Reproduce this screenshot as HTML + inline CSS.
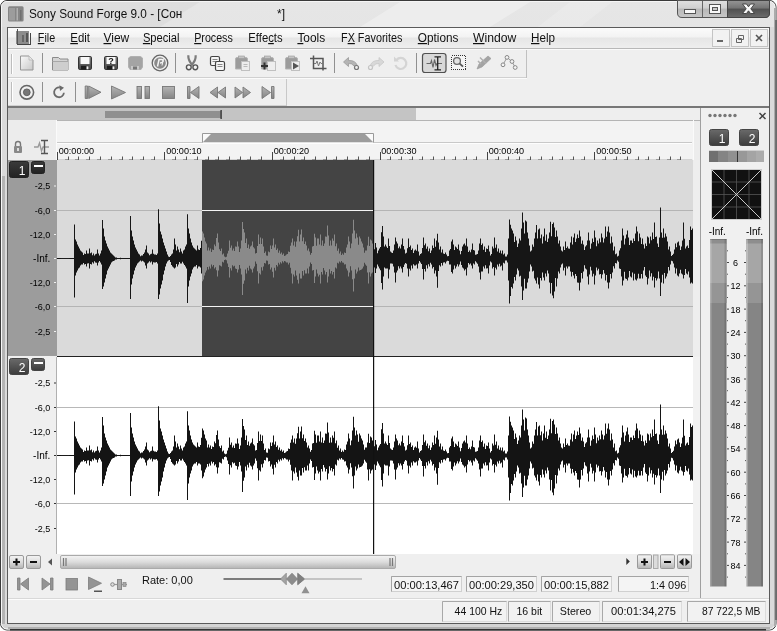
<!DOCTYPE html>
<html><head><meta charset="utf-8"><title>Sony Sound Forge 9.0</title>
<style>
html,body{margin:0;padding:0;}
body{width:777px;height:631px;overflow:hidden;background:#fff;font-family:"Liberation Sans",sans-serif;}
svg{position:absolute;left:0;top:0;filter:grayscale(1);}
text{font-family:"Liberation Sans",sans-serif;}
.rl{font-size:9.5px;fill:#000;}
.db{font-size:9px;fill:#000;}
.db3{font-size:10px;fill:#000;}
.db2{font-size:9.5px;fill:#111;}
.mn{font-size:12px;fill:#111;}
.tt{font-size:12px;fill:#111;}
.st{font-size:11px;fill:#111;}
</style></head><body>
<svg width="777" height="631" viewBox="0 0 777 631">
<defs>

<linearGradient id="gTitle" x1="0" y1="0" x2="0" y2="1"><stop offset="0" stop-color="#e6e6e6"/><stop offset="0.5" stop-color="#dcdcdc"/><stop offset="1" stop-color="#d4d4d4"/></linearGradient>
<linearGradient id="gMenu" x1="0" y1="0" x2="0" y2="1"><stop offset="0" stop-color="#fbfbfb"/><stop offset="0.45" stop-color="#f3f3f3"/><stop offset="0.5" stop-color="#e6e6e6"/><stop offset="1" stop-color="#eeeeee"/></linearGradient>
<linearGradient id="gBtn" x1="0" y1="0" x2="0" y2="1"><stop offset="0" stop-color="#e0e0e0"/><stop offset="0.45" stop-color="#cfcfcf"/><stop offset="0.5" stop-color="#b8b8b8"/><stop offset="1" stop-color="#c8c8c8"/></linearGradient>
<linearGradient id="gClose" x1="0" y1="0" x2="0" y2="1"><stop offset="0" stop-color="#959595"/><stop offset="0.45" stop-color="#747474"/><stop offset="0.5" stop-color="#505050"/><stop offset="1" stop-color="#6c6c6c"/></linearGradient>
<linearGradient id="gScroll" x1="0" y1="0" x2="0" y2="1"><stop offset="0" stop-color="#f4f4f4"/><stop offset="0.5" stop-color="#dcdcdc"/><stop offset="1" stop-color="#b4b4b4"/></linearGradient>
<linearGradient id="gDark" x1="0" y1="0" x2="0" y2="1"><stop offset="0" stop-color="#6a6a6a"/><stop offset="1" stop-color="#3c3c3c"/></linearGradient>
<linearGradient id="gDark1" x1="0" y1="0" x2="0" y2="1"><stop offset="0" stop-color="#3a3a3a"/><stop offset="1" stop-color="#222"/></linearGradient>
<linearGradient id="gMeter" x1="0" y1="0" x2="0" y2="1"><stop offset="0" stop-color="#b0b0b0"/><stop offset="0.2" stop-color="#909090"/><stop offset="1" stop-color="#808080"/></linearGradient>

<linearGradient id="gSave" x1="0" y1="0" x2="0" y2="1"><stop offset="0" stop-color="#7a7a7a"/><stop offset="1" stop-color="#484848"/></linearGradient>
<linearGradient id="gDoc" x1="0" y1="0" x2="1" y2="1"><stop offset="0" stop-color="#fafafa"/><stop offset="1" stop-color="#c8c8c8"/></linearGradient>
<linearGradient id="gIco" x1="0" y1="0" x2="0" y2="1"><stop offset="0" stop-color="#b4b4b4"/><stop offset="1" stop-color="#848484"/></linearGradient>

</defs>

<rect x="0" y="0" width="777" height="631" fill="#fff"/>
<rect x="0.500" y="0.500" width="775.500" height="629.500" rx="6.500" ry="6.500" fill="url(#gTitle)" stroke="#3a3a3a"/>
<rect x="1" y="27" width="775" height="597" fill="#dadada"/>
<rect x="1.500" y="1.500" width="773.500" height="627.500" rx="5.500" ry="5.500" fill="none" stroke="#f6f6f6"/>
<rect x="2" y="176" width="3" height="448" fill="#b4b4b4"/>
<rect x="774" y="8" width="2" height="618" fill="#acacac"/>
<rect x="8" y="627" width="762" height="2" fill="#b0b0b0"/>
<rect x="0" y="20" width="1" height="600" fill="#3a3a3a"/>
<rect x="775.500" y="20" width="1" height="600" fill="#3a3a3a"/>
<rect x="10" y="629" width="756" height="1.500" fill="#333"/>
<!-- client -->
<rect x="7.500" y="27.500" width="762" height="596" fill="#efefef" stroke="#5a5a5a"/>
<!-- title -->
<path d="M400 2 L530 2 L490 27 L360 27 Z" fill="#fff" opacity="0.300"/>
<path d="M570 2 L612 2 L580 27 L538 27 Z" fill="#fff" opacity="0.180"/>
<path d="M2 2 L200 2 L160 27 L2 27 Z" fill="#000" opacity="0.030"/>
<rect x="8" y="6.300" width="15.600" height="15.200" rx="1.500" fill="#858585"/>
<rect x="9" y="8" width="6" height="12.500" fill="#9c9c9c"/>
<rect x="16.500" y="8" width="1.500" height="12.500" fill="#b0b0b0"/>
<rect x="20" y="10" width="1.500" height="10.500" fill="#707070"/>
<text x="29" y="18" class="tt" textLength="153.2" lengthAdjust="spacingAndGlyphs">Sony Sound Forge 9.0 - [Сон</text>
<text x="277" y="18" class="tt">*]</text>
<!-- caption buttons -->
<path d="M677.500 0.500 L677.500 13 Q677.500 17.500 682 17.500 L765 17.500 Q769.500 17.500 769.500 13 L769.500 0.500 Z" fill="url(#gBtn)" stroke="#555"/>
<path d="M727.500 0.500 L727.500 17.500 L765 17.500 Q769.500 17.500 769.500 13 L769.500 0.500 Z" fill="url(#gClose)" stroke="#444"/>
<rect x="702" y="1" width="1" height="16" fill="#666"/>
<rect x="684.500" y="9.500" width="11" height="4" fill="#f8f8f8" stroke="#555"/>
<rect x="709.500" y="4.500" width="11" height="9" fill="#f8f8f8" stroke="#555"/>
<rect x="712.500" y="7.500" width="5" height="3" fill="#c8c8c8" stroke="#555"/>
<path d="M742.500 4 L746.500 4 L748.500 6.800 L750.500 4 L754.500 4 L750.800 8.800 L754.500 13.500 L750.500 13.500 L748.500 10.800 L746.500 13.500 L742.500 13.500 L746.200 8.800 Z" fill="#f8f8f8" stroke="#3c3c3c" stroke-width="0.900"/>


<rect x="8" y="28" width="761" height="20" fill="url(#gMenu)"/>
<rect x="8" y="48" width="761" height="1" fill="#b8b8b8"/>
<rect x="8" y="49" width="761" height="1" fill="#fafafa"/>
<!-- app icon -->
<rect x="16" y="31" width="13" height="13" fill="#8c8c8c"/>
<rect x="17" y="29" width="1" height="16" fill="#555"/>
<rect x="17" y="44" width="14" height="1" fill="#444"/>
<rect x="30" y="33" width="1" height="12" fill="#444"/>
<rect x="26" y="33" width="2" height="9" fill="#555"/>
<rect x="22" y="35" width="2" height="7" fill="#666"/>
<g class="mn">
<text x="37.8" y="42" textLength="17.4" lengthAdjust="spacingAndGlyphs"><tspan text-decoration="underline">F</tspan>ile</text>
<text x="70.3" y="42" textLength="19.7" lengthAdjust="spacingAndGlyphs"><tspan text-decoration="underline">E</tspan>dit</text>
<text x="103.5" y="42" textLength="25.8" lengthAdjust="spacingAndGlyphs"><tspan text-decoration="underline">V</tspan>iew</text>
<text x="142.9" y="42" textLength="36.6" lengthAdjust="spacingAndGlyphs"><tspan text-decoration="underline">S</tspan>pecial</text>
<text x="194.2" y="42" textLength="38.6" lengthAdjust="spacingAndGlyphs"><tspan text-decoration="underline">P</tspan>rocess</text>
<text x="248.3" y="42" textLength="34.3" lengthAdjust="spacingAndGlyphs">Effe<tspan text-decoration="underline">c</tspan>ts</text>
<text x="297.4" y="42" textLength="27.8" lengthAdjust="spacingAndGlyphs"><tspan text-decoration="underline">T</tspan>ools</text>
<text x="341" y="42" textLength="61.4" lengthAdjust="spacingAndGlyphs">F<tspan text-decoration="underline">X</tspan> Favorites</text>
<text x="417.8" y="42" textLength="40.6" lengthAdjust="spacingAndGlyphs"><tspan text-decoration="underline">O</tspan>ptions</text>
<text x="473" y="42" textLength="43.3" lengthAdjust="spacingAndGlyphs"><tspan text-decoration="underline">W</tspan>indow</text>
<text x="531" y="42" textLength="24.0" lengthAdjust="spacingAndGlyphs"><tspan text-decoration="underline">H</tspan>elp</text>
</g>
<!-- mdi buttons -->
<rect x="712.500" y="29.500" width="17" height="17" fill="#f2f2f2" stroke="#c4c4c4"/>
<rect x="731.500" y="29.500" width="17" height="17" fill="#f2f2f2" stroke="#c4c4c4"/>
<rect x="750.500" y="29.500" width="17" height="17" fill="#f2f2f2" stroke="#c4c4c4"/>
<rect x="717" y="40" width="6" height="2" fill="#666"/>
<path d="M738.500 35.500 h5 v4 h-5 z M736.500 38.500 h5 v4 h-5 z" fill="#f2f2f2" stroke="#666"/>
<path d="M756 35 l6 6 M762 35 l-6 6" stroke="#555" stroke-width="1.6" fill="none"/>


<!-- toolbar row separators -->
<rect x="8" y="77" width="519" height="1" fill="#d0d0d0"/>
<rect x="8" y="78" width="519" height="1" fill="#fbfbfb"/>
<rect x="526" y="50" width="1" height="28" fill="#c0c0c0"/>
<rect x="8" y="105" width="278" height="1" fill="#d0d0d0"/>
<rect x="286" y="79" width="1" height="27" fill="#c8c8c8"/>
<rect x="8" y="106" width="761" height="2" fill="#777"/>
<!-- grips -->
<rect x="11" y="54" width="1" height="20" fill="#bdbdbd"/><rect x="12" y="54" width="1" height="20" fill="#fff"/>
<rect x="11" y="82" width="1" height="20" fill="#bdbdbd"/><rect x="12" y="82" width="1" height="20" fill="#fff"/>
<!-- separators row1 -->
<g fill="#909090">
<rect x="42" y="53" width="1" height="20"/><rect x="175" y="53" width="1" height="20"/><rect x="334" y="53" width="1" height="20"/><rect x="416" y="53" width="1" height="20"/>
<rect x="42" y="82" width="1" height="20"/><rect x="75" y="82" width="1" height="20"/>
</g>

<!-- new -->
<path d="M20.500 56 h8.500 l4 4 v10 h-12.500 z" fill="url(#gDoc)" stroke="#959595"/>
<path d="M29 56 v4 h4" fill="#e8e8e8" stroke="#b8b8b8" stroke-width="0.800"/>
<!-- open -->
<path d="M52.500 59 v-1.500 h6 l1.500 1.500 h8 v11 h-15.500 z" fill="#d4d4d4" stroke="#8a8a8a"/>
<path d="M52.500 61.500 h15.500" stroke="#a8a8a8"/>
<rect x="53" y="62" width="15" height="8" fill="#cecece"/>
<!-- save -->
<rect x="78.500" y="56.500" width="13" height="13" rx="1.200" fill="url(#gSave)" stroke="#333"/>
<rect x="80.500" y="57" width="9" height="7" fill="#f8f8f8"/>
<rect x="81" y="65.800" width="8" height="3.700" fill="#1c1c1c"/><rect x="86.500" y="66.300" width="2" height="3" fill="#f0f0f0"/>
<!-- save as -->
<rect x="104.500" y="56.500" width="13" height="13" rx="1.200" fill="url(#gSave)" stroke="#333"/>
<rect x="106.500" y="57" width="9" height="7" fill="#f8f8f8"/>
<text x="111" y="63.800" text-anchor="middle" style="font-size:9px;font-weight:bold;fill:#111">?</text>
<rect x="107" y="65.800" width="8" height="3.700" fill="#1c1c1c"/><rect x="112.500" y="66.300" width="2" height="3" fill="#f0f0f0"/>
<!-- render as (gray) -->
<path d="M128.500 58 l2 -1.500 h10 l2 1.500 v9 l-1.500 2.500 h-11 l-1.500 -2.500 z" fill="#a4a4a4" stroke="#b0b0b0"/>
<rect x="131" y="66" width="8" height="3.500" fill="#c8c8c8"/><rect x="133" y="66.500" width="4" height="3" fill="#777"/>
<!-- P circle -->
<circle cx="160" cy="63" r="7.800" fill="#f0f0f0" stroke="#666" stroke-width="1.300"/>
<circle cx="160" cy="63" r="5.800" fill="#8a8a8a"/>
<path d="M157.500 66.500 l1.500 -7 h3 q1.500 0.500 1 2 q-0.800 1.500 -3 1.500" fill="none" stroke="#f4f4f4" stroke-width="1.500"/>
<path d="M163.500 58.500 l-1.500 7" stroke="#f4f4f4" stroke-width="1"/>
<!-- scissors -->
<path d="M188.300 55.300 q-0.300 5 4.200 10 M195.700 55.300 q0.300 5 -4.200 10" fill="none" stroke="#7c7c7c" stroke-width="2.200"/>
<circle cx="188.800" cy="67.300" r="2.400" fill="#f4f4f4" stroke="#555" stroke-width="1.400"/>
<circle cx="195.300" cy="67.300" r="2.400" fill="#f4f4f4" stroke="#555" stroke-width="1.400"/>
<!-- copy -->
<rect x="210.500" y="56.500" width="9" height="9" rx="1.500" fill="#f6f6f6" stroke="#444" stroke-width="1.200"/>
<path d="M212.500 59.500 h5 M212.500 61.500 h5" stroke="#888"/>
<rect x="215.500" y="61.500" width="9" height="9" rx="1.500" fill="#f6f6f6" stroke="#444" stroke-width="1.200"/>
<path d="M217.500 64.500 h5 M217.500 66.500 h5" stroke="#888"/>
<!-- paste -->
<g id="clip1">
<path d="M235.500 59 q0 -1.500 1.500 -1.500 h9 q1.500 0 1.500 1.500 v10 h-12 z" fill="#9c9c9c" stroke="#b4b4b4"/>
<rect x="238.500" y="56" width="6" height="2.500" fill="#c4c4c4" stroke="#999" stroke-width="0.600"/>
<rect x="241.500" y="61.500" width="8" height="9" fill="#eee" stroke="#c0c0c0"/>
</g>
<path d="M243.500 64.500 h4 M243.500 66.500 h4" stroke="#bbb"/>
<!-- paste special -->
<path d="M261.500 59 q0 -1.500 1.500 -1.500 h9 q1.500 0 1.500 1.500 v10 h-12 z" fill="#9c9c9c" stroke="#b4b4b4"/>
<rect x="264.500" y="56" width="6" height="2.500" fill="#c4c4c4" stroke="#999" stroke-width="0.600"/>
<rect x="267.500" y="61.500" width="8" height="9" fill="#eee" stroke="#c0c0c0"/>
<path d="M261 66 h7 M264.500 62.500 v7" stroke="#333" stroke-width="2"/>
<!-- paste play -->
<path d="M285.500 59 q0 -1.500 1.500 -1.500 h9 q1.500 0 1.500 1.500 v10 h-12 z" fill="#9c9c9c" stroke="#b4b4b4"/>
<rect x="288.500" y="56" width="6" height="2.500" fill="#c4c4c4" stroke="#999" stroke-width="0.600"/>
<rect x="291.500" y="61.500" width="8" height="9" fill="#eee" stroke="#c0c0c0"/>
<path d="M293 62.500 v7 l6 -3.500 z" fill="#555"/>
<!-- trim/crop -->
<path d="M313.500 55.500 v13 h13 M310 58.500 h13 v12" fill="none" stroke="#555" stroke-width="1.500"/>
<path d="M314 63.500 h2 l1 -2.500 l1.500 5 l1.500 -4 l1 1.500 h1.500" fill="none" stroke="#777" stroke-width="1"/>
<!-- undo -->
<path d="M343.500 62 l5 -4.500 v3 q7 -0.500 9 5.500 h-3.500 q-2 -3 -5.500 -2.500 v3 z" fill="#b4b4b4" stroke="#9a9a9a" stroke-width="0.800"/>
<circle cx="356.500" cy="67.500" r="2" fill="#f0f0f0" stroke="#777" stroke-width="1.200"/>
<!-- redo faded -->
<path d="M384 62 l-5 -4.500 v3 q-7 -0.500 -9 5.500 h3.500 q2 -3 5.500 -2.500 v3 z" fill="#d8d8d8" stroke="#c8c8c8" stroke-width="0.800"/>
<circle cx="370.500" cy="67.500" r="2" fill="#f0f0f0" stroke="#c4c4c4" stroke-width="1.200"/>
<!-- refresh faded -->
<path d="M396.500 60 a5.500 5.500 0 1 1 -1 5" fill="none" stroke="#d4d4d4" stroke-width="2.200"/>
<path d="M394 56.500 v5 h5 z" fill="#d4d4d4"/>
<!-- edit tool pressed -->
<rect x="422.500" y="53.500" width="23.500" height="19" rx="2.500" fill="#d8d8d8" stroke="#505050" stroke-width="1.200"/>
<path d="M426.500 63.500 h4 l1 -3 l1.500 7 l1.500 -8 l1.500 6 l1 -2 h5" fill="none" stroke="#666" stroke-width="1.100"/>
<path d="M434.500 56.800 h6.500 M434.500 69.800 h6.500 M437.700 56.800 v13" fill="none" stroke="#222" stroke-width="1.300"/>
<!-- magnify -->
<rect x="451.500" y="55.500" width="14" height="14" fill="#f4f4f4" stroke="#333" stroke-dasharray="1 1" shape-rendering="crispEdges"/>
<circle cx="457" cy="61" r="3.400" fill="#e4e4e4" stroke="#666" stroke-width="1.300"/>
<path d="M459.700 63.700 l3.300 3" stroke="#555" stroke-width="1.800"/>
<!-- pencil -->
<path d="M477 69 l2 -5 l9 -8 l3 2.500 l-9 8.500 z" fill="#a4a4a4" stroke="#999" stroke-width="0.600"/>
<path d="M480 57.500 l6 6 M478 61 l3 3" stroke="#b0b0b0" stroke-width="1.500"/>
<!-- envelope -->
<path d="M503 64.800 L507 57.400 L512 61.500 L515.200 67.500" fill="none" stroke="#999" stroke-width="1"/>
<g fill="#f4f4f4" stroke="#888" stroke-width="1"><circle cx="503" cy="64.800" r="1.900"/><circle cx="507" cy="57.400" r="1.900"/><circle cx="512" cy="61.500" r="1.900"/><circle cx="515.200" cy="67.500" r="1.900"/></g>
<!-- row 2 -->
<circle cx="26.800" cy="92.300" r="6.800" fill="#f0f0f0" stroke="#666" stroke-width="1.600"/>
<circle cx="26.800" cy="92.300" r="3.400" fill="#777" stroke="#555" stroke-width="0.800"/>
<path d="M59.850 87.500 A4.900 4.900 0 1 0 63.900 92.700" fill="none" stroke="#6a6a6a" stroke-width="1.800"/>
<path d="M59.300 85.300 L64 87.800 L60 91 Z" fill="#6a6a6a"/>
<g fill="url(#gIco)" stroke="#777" stroke-width="0.900">
<path d="M85.200 86 h2.400 v12.500 h-2.400 z"/>
<path d="M88.700 86 v12.500 l12.300 -6.250 z"/>
<path d="M111.500 86 v13 l14 -6.500 z"/>
<rect x="137" y="86.500" width="4.500" height="12"/><rect x="145" y="86.500" width="4.500" height="12"/>
<rect x="162.500" y="86.500" width="12" height="12"/>
<path d="M187.500 86.500 h2.500 v12 h-2.500 z M199 86.500 v12 l-8.500 -6 z"/>
<path d="M217.500 87 v11 l-7.500 -5.500 z M225.500 87 v11 l-7.500 -5.500 z"/>
<path d="M235 87 v11 l7.500 -5.500 z M243 87 v11 l7.500 -5.500 z"/>
<path d="M262 86.500 v12 l8.500 -6 z M271.500 86.500 h2.500 v12 h-2.500 z"/>
</g>


<!-- overview bar -->
<rect x="8" y="108" width="408" height="12" fill="#c4c4c4"/>
<rect x="416" y="108" width="284" height="12" fill="#eeeeee"/>
<rect x="105" y="111" width="116" height="7" fill="#909090"/>
<rect x="220.500" y="110" width="1.200" height="9" fill="#222"/>
<!-- ruler header -->
<rect x="8" y="120" width="692" height="40" fill="#ececec"/>
<rect x="57" y="121" width="636" height="38" fill="#f3f3f3"/>
<rect x="57" y="120" width="643" height="1" fill="#b4b4b4"/>
<rect x="56" y="120" width="1" height="40" fill="#fafafa"/>
<rect x="693" y="120" width="1" height="40" fill="#fafafa"/>
<rect x="57" y="142" width="635" height="1" fill="#c8c8c8"/>
<rect x="57" y="143" width="635" height="1" fill="#fdfdfd"/>
<!-- selection marker -->
<path d="M202.500 142.500 L202.500 133.500 L373.500 133.500 L373.500 142.500" fill="#fafafa" stroke="#999"/>
<path d="M203 142 L211 134 L365 134 L373 142 Z" fill="#9c9c9c"/>
<!-- lock icon -->
<rect x="14" y="146" width="8" height="7" rx="1" fill="#888"/>
<path d="M15.500 146 v-2 a2.500 2.500 0 0 1 5 0 v2" fill="none" stroke="#777" stroke-width="1.400"/>
<rect x="17" y="148" width="2" height="3" fill="#ddd"/>
<!-- edit tool icon -->
<path d="M34 147 h4 l1.500 -4 l2 8 l1.500 -4 h6" fill="none" stroke="#999" stroke-width="1.300"/>
<path d="M41 140.500 h7 M41 153.500 h7 M44.500 140.500 v13" fill="none" stroke="#555" stroke-width="1.400"/>

<!-- ruler -->
<rect x="57" y="159" width="635" height="1" fill="#d4d4d4"/>
<rect x="57" y="152" width="1" height="8" fill="#444"/>
<rect x="68" y="156.500" width="1" height="3.500" fill="#555"/>
<rect x="65" y="159" width="3" height="1" fill="#999"/>
<rect x="78" y="156.500" width="1" height="3.500" fill="#555"/>
<rect x="75" y="159" width="3" height="1" fill="#999"/>
<rect x="89" y="156.500" width="1" height="3.500" fill="#555"/>
<rect x="86" y="159" width="3" height="1" fill="#999"/>
<rect x="100" y="156.500" width="1" height="3.500" fill="#555"/>
<rect x="97" y="159" width="3" height="1" fill="#999"/>
<rect x="111" y="156.500" width="1" height="3.500" fill="#555"/>
<rect x="108" y="159" width="3" height="1" fill="#999"/>
<rect x="122" y="156.500" width="1" height="3.500" fill="#555"/>
<rect x="119" y="159" width="3" height="1" fill="#999"/>
<rect x="132" y="156.500" width="1" height="3.500" fill="#555"/>
<rect x="129" y="159" width="3" height="1" fill="#999"/>
<rect x="143" y="156.500" width="1" height="3.500" fill="#555"/>
<rect x="140" y="159" width="3" height="1" fill="#999"/>
<rect x="154" y="156.500" width="1" height="3.500" fill="#555"/>
<rect x="151" y="159" width="3" height="1" fill="#999"/>
<rect x="164" y="152" width="1" height="8" fill="#444"/>
<rect x="175" y="156.500" width="1" height="3.500" fill="#555"/>
<rect x="172" y="159" width="3" height="1" fill="#999"/>
<rect x="186" y="156.500" width="1" height="3.500" fill="#555"/>
<rect x="183" y="159" width="3" height="1" fill="#999"/>
<rect x="197" y="156.500" width="1" height="3.500" fill="#555"/>
<rect x="194" y="159" width="3" height="1" fill="#999"/>
<rect x="208" y="156.500" width="1" height="3.500" fill="#555"/>
<rect x="205" y="159" width="3" height="1" fill="#999"/>
<rect x="218" y="156.500" width="1" height="3.500" fill="#555"/>
<rect x="215" y="159" width="3" height="1" fill="#999"/>
<rect x="229" y="156.500" width="1" height="3.500" fill="#555"/>
<rect x="226" y="159" width="3" height="1" fill="#999"/>
<rect x="240" y="156.500" width="1" height="3.500" fill="#555"/>
<rect x="237" y="159" width="3" height="1" fill="#999"/>
<rect x="250" y="156.500" width="1" height="3.500" fill="#555"/>
<rect x="247" y="159" width="3" height="1" fill="#999"/>
<rect x="261" y="156.500" width="1" height="3.500" fill="#555"/>
<rect x="258" y="159" width="3" height="1" fill="#999"/>
<rect x="272" y="152" width="1" height="8" fill="#444"/>
<rect x="283" y="156.500" width="1" height="3.500" fill="#555"/>
<rect x="280" y="159" width="3" height="1" fill="#999"/>
<rect x="294" y="156.500" width="1" height="3.500" fill="#555"/>
<rect x="291" y="159" width="3" height="1" fill="#999"/>
<rect x="304" y="156.500" width="1" height="3.500" fill="#555"/>
<rect x="301" y="159" width="3" height="1" fill="#999"/>
<rect x="315" y="156.500" width="1" height="3.500" fill="#555"/>
<rect x="312" y="159" width="3" height="1" fill="#999"/>
<rect x="326" y="156.500" width="1" height="3.500" fill="#555"/>
<rect x="323" y="159" width="3" height="1" fill="#999"/>
<rect x="336" y="156.500" width="1" height="3.500" fill="#555"/>
<rect x="333" y="159" width="3" height="1" fill="#999"/>
<rect x="347" y="156.500" width="1" height="3.500" fill="#555"/>
<rect x="344" y="159" width="3" height="1" fill="#999"/>
<rect x="358" y="156.500" width="1" height="3.500" fill="#555"/>
<rect x="355" y="159" width="3" height="1" fill="#999"/>
<rect x="369" y="156.500" width="1" height="3.500" fill="#555"/>
<rect x="366" y="159" width="3" height="1" fill="#999"/>
<rect x="380" y="152" width="1" height="8" fill="#444"/>
<rect x="390" y="156.500" width="1" height="3.500" fill="#555"/>
<rect x="387" y="159" width="3" height="1" fill="#999"/>
<rect x="401" y="156.500" width="1" height="3.500" fill="#555"/>
<rect x="398" y="159" width="3" height="1" fill="#999"/>
<rect x="412" y="156.500" width="1" height="3.500" fill="#555"/>
<rect x="409" y="159" width="3" height="1" fill="#999"/>
<rect x="422" y="156.500" width="1" height="3.500" fill="#555"/>
<rect x="419" y="159" width="3" height="1" fill="#999"/>
<rect x="433" y="156.500" width="1" height="3.500" fill="#555"/>
<rect x="430" y="159" width="3" height="1" fill="#999"/>
<rect x="444" y="156.500" width="1" height="3.500" fill="#555"/>
<rect x="441" y="159" width="3" height="1" fill="#999"/>
<rect x="455" y="156.500" width="1" height="3.500" fill="#555"/>
<rect x="452" y="159" width="3" height="1" fill="#999"/>
<rect x="466" y="156.500" width="1" height="3.500" fill="#555"/>
<rect x="463" y="159" width="3" height="1" fill="#999"/>
<rect x="476" y="156.500" width="1" height="3.500" fill="#555"/>
<rect x="473" y="159" width="3" height="1" fill="#999"/>
<rect x="487" y="152" width="1" height="8" fill="#444"/>
<rect x="498" y="156.500" width="1" height="3.500" fill="#555"/>
<rect x="495" y="159" width="3" height="1" fill="#999"/>
<rect x="508" y="156.500" width="1" height="3.500" fill="#555"/>
<rect x="505" y="159" width="3" height="1" fill="#999"/>
<rect x="519" y="156.500" width="1" height="3.500" fill="#555"/>
<rect x="516" y="159" width="3" height="1" fill="#999"/>
<rect x="530" y="156.500" width="1" height="3.500" fill="#555"/>
<rect x="527" y="159" width="3" height="1" fill="#999"/>
<rect x="541" y="156.500" width="1" height="3.500" fill="#555"/>
<rect x="538" y="159" width="3" height="1" fill="#999"/>
<rect x="552" y="156.500" width="1" height="3.500" fill="#555"/>
<rect x="549" y="159" width="3" height="1" fill="#999"/>
<rect x="562" y="156.500" width="1" height="3.500" fill="#555"/>
<rect x="559" y="159" width="3" height="1" fill="#999"/>
<rect x="573" y="156.500" width="1" height="3.500" fill="#555"/>
<rect x="570" y="159" width="3" height="1" fill="#999"/>
<rect x="584" y="156.500" width="1" height="3.500" fill="#555"/>
<rect x="581" y="159" width="3" height="1" fill="#999"/>
<rect x="594" y="152" width="1" height="8" fill="#444"/>
<rect x="605" y="156.500" width="1" height="3.500" fill="#555"/>
<rect x="602" y="159" width="3" height="1" fill="#999"/>
<rect x="616" y="156.500" width="1" height="3.500" fill="#555"/>
<rect x="613" y="159" width="3" height="1" fill="#999"/>
<rect x="627" y="156.500" width="1" height="3.500" fill="#555"/>
<rect x="624" y="159" width="3" height="1" fill="#999"/>
<rect x="638" y="156.500" width="1" height="3.500" fill="#555"/>
<rect x="635" y="159" width="3" height="1" fill="#999"/>
<rect x="648" y="156.500" width="1" height="3.500" fill="#555"/>
<rect x="645" y="159" width="3" height="1" fill="#999"/>
<rect x="659" y="156.500" width="1" height="3.500" fill="#555"/>
<rect x="656" y="159" width="3" height="1" fill="#999"/>
<rect x="670" y="156.500" width="1" height="3.500" fill="#555"/>
<rect x="667" y="159" width="3" height="1" fill="#999"/>
<rect x="680" y="156.500" width="1" height="3.500" fill="#555"/>
<rect x="677" y="159" width="3" height="1" fill="#999"/>
<text x="58.7" y="154.300" class="rl" textLength="35.400" lengthAdjust="spacingAndGlyphs">00:00:00</text>
<text x="166.2" y="154.300" class="rl" textLength="35.400" lengthAdjust="spacingAndGlyphs">00:00:10</text>
<text x="273.7" y="154.300" class="rl" textLength="35.400" lengthAdjust="spacingAndGlyphs">00:00:20</text>
<text x="381.2" y="154.300" class="rl" textLength="35.400" lengthAdjust="spacingAndGlyphs">00:00:30</text>
<text x="488.7" y="154.300" class="rl" textLength="35.400" lengthAdjust="spacingAndGlyphs">00:00:40</text>
<text x="596.2" y="154.300" class="rl" textLength="35.400" lengthAdjust="spacingAndGlyphs">00:00:50</text>
<!-- track 1 -->

<rect x="8" y="160" width="49" height="196" fill="#9c9c9c"/>
<rect x="57" y="160" width="636" height="196" fill="#dadada"/>
<rect x="693" y="160" width="7" height="196" fill="#eeeeee"/>
<rect x="57" y="210" width="636" height="1" fill="#b4b4b4"/>
<rect x="57" y="306" width="636" height="1" fill="#b4b4b4"/>
<rect x="57" y="258" width="636" height="1" fill="#222"/>
<rect x="9.500" y="161.500" width="19" height="16" rx="2" fill="url(#gDark1)" stroke="#222"/>
<text x="22" y="174.500" text-anchor="middle" style="font-size:12px;fill:#fff">1</text>
<rect x="31.500" y="161.500" width="13" height="12" rx="2" fill="url(#gDark1)" stroke="#222"/>
<rect x="34" y="165" width="9" height="2" fill="#fff"/>

<path d="M57 258 L58 258 L58 258.1 L59 258.1 L59 258.1 L60 258.1 L60 258.1 L61 258.1 L61 258.2 L62 258.2 L62 258.2 L63 258.2 L63 258.2 L64 258.2 L64 258.2 L65 258.2 L65 258.2 L66 258.2 L66 258.2 L67 258.2 L67 258.2 L68 258.2 L68 258.2 L69 258.2 L69 258.1 L70 258.1 L70 258.1 L71 258.1 L71 258.1 L72 258.1 L72 258.1 L73 258.1 L73 258 L74 258 L74 224.5 L75 224.5 L75 239.5 L76 239.5 L76 241.5 L77 241.5 L77 244.5 L78 244.5 L78 246.5 L79 246.5 L79 248.5 L80 248.5 L80 250.5 L81 250.5 L81 251.5 L82 251.5 L82 252.5 L83 252.5 L83 255 L84 255 L84 253.5 L85 253.5 L85 254 L86 254 L86 250.5 L87 250.5 L87 253.5 L88 253.5 L88 253.6 L89 253.6 L89 248.5 L90 248.5 L90 253.3 L91 253.3 L91 252.5 L92 252.5 L92 255.3 L93 255.3 L93 253.5 L94 253.5 L94 255.4 L95 255.4 L95 254.2 L96 254.2 L96 253.7 L97 253.7 L97 249.5 L98 249.5 L98 253.5 L99 253.5 L99 255.6 L100 255.6 L100 253.5 L101 253.5 L101 250.5 L102 250.5 L102 220 L103 220 L103 228.5 L104 228.5 L104 236.5 L105 236.5 L105 240.5 L106 240.5 L106 243.5 L107 243.5 L107 246.5 L108 246.5 L108 248.5 L109 248.5 L109 250.5 L110 250.5 L110 252.5 L111 252.5 L111 253.5 L112 253.5 L112 254.5 L113 254.5 L113 255.5 L114 255.5 L114 256.5 L115 256.5 L115 257.6 L116 257.6 L116 257.5 L117 257.5 L117 257.9 L118 257.9 L118 257.9 L119 257.9 L119 257.9 L120 257.9 L120 257.7 L121 257.7 L121 257.9 L122 257.9 L122 258 L123 258 L123 258.1 L124 258.1 L124 258.1 L125 258.1 L125 258.1 L126 258.1 L126 258.1 L127 258.1 L127 258.1 L128 258.1 L128 258.1 L129 258.1 L129 258 L130 258 L130 215.9 L131 215.9 L131 230.5 L132 230.5 L132 236.5 L133 236.5 L133 240.5 L134 240.5 L134 244.5 L135 244.5 L135 247.5 L136 247.5 L136 249.5 L137 249.5 L137 251.5 L138 251.5 L138 253.5 L139 253.5 L139 254.5 L140 254.5 L140 256.2 L141 256.2 L141 255.5 L142 255.5 L142 255.6 L143 255.6 L143 254.1 L144 254.1 L144 252.5 L145 252.5 L145 249.5 L146 249.5 L146 245.5 L147 245.5 L147 252.5 L148 252.5 L148 253.5 L149 253.5 L149 255.3 L150 255.3 L150 254.3 L151 254.3 L151 253.8 L152 253.8 L152 249.5 L153 249.5 L153 253.7 L154 253.7 L154 254.5 L155 254.5 L155 254.5 L156 254.5 L156 255.1 L157 255.1 L157 253.5 L158 253.5 L158 209.3 L159 209.3 L159 223.5 L160 223.5 L160 231.5 L161 231.5 L161 234.5 L162 234.5 L162 238.5 L163 238.5 L163 242.5 L164 242.5 L164 245.5 L165 245.5 L165 248.5 L166 248.5 L166 251.5 L167 251.5 L167 254.5 L168 254.5 L168 256.5 L169 256.5 L169 257.1 L170 257.1 L170 256 L171 256 L171 254.5 L172 254.5 L172 253.5 L173 253.5 L173 249.5 L174 249.5 L174 238.5 L175 238.5 L175 244.5 L176 244.5 L176 250.4 L177 250.4 L177 246.5 L178 246.5 L178 249.5 L179 249.5 L179 252.3 L180 252.3 L180 248.5 L181 248.5 L181 251.5 L182 251.5 L182 253.4 L183 253.4 L183 250.5 L184 250.5 L184 249.5 L185 249.5 L185 246.5 L186 246.5 L186 244.5 L187 244.5 L187 214.2 L188 214.2 L188 228.5 L189 228.5 L189 233.5 L190 233.5 L190 238.5 L191 238.5 L191 242.5 L192 242.5 L192 245.5 L193 245.5 L193 247.5 L194 247.5 L194 248.5 L195 248.5 L195 249.5 L196 249.5 L196 250.6 L197 250.6 L197 245.5 L198 245.5 L198 249.5 L199 249.5 L199 250 L200 250 L200 248 L201 248 L201 240.7 L202 240.7 L202 231.5 L203 231.5 L203 233.5 L204 233.5 L204 237.5 L205 237.5 L205 241.5 L206 241.5 L206 243.5 L207 243.5 L207 250.6 L208 250.6 L208 247.5 L209 247.5 L209 250.5 L210 250.5 L210 248.5 L211 248.5 L211 252.1 L212 252.1 L212 249.5 L213 249.5 L213 250.1 L214 250.1 L214 244.5 L215 244.5 L215 246.3 L216 246.3 L216 238.1 L217 238.1 L217 233.5 L218 233.5 L218 242.5 L219 242.5 L219 249.2 L220 249.2 L220 251.1 L221 251.1 L221 248.5 L222 248.5 L222 254.6 L223 254.6 L223 253.5 L224 253.5 L224 256.6 L225 256.6 L225 257.3 L226 257.3 L226 256.7 L227 256.7 L227 253.5 L228 253.5 L228 250.7 L229 250.7 L229 240.5 L230 240.5 L230 247.8 L231 247.8 L231 245.5 L232 245.5 L232 250.6 L233 250.6 L233 248.5 L234 248.5 L234 251.1 L235 251.1 L235 246.5 L236 246.5 L236 246.7 L237 246.7 L237 241.5 L238 241.5 L238 246.5 L239 246.5 L239 252 L240 252 L240 248.5 L241 248.5 L241 240.5 L242 240.5 L242 222.1 L243 222.1 L243 229 L244 229 L244 232.5 L245 232.5 L245 243 L246 243 L246 238.5 L247 238.5 L247 248 L248 248 L248 244.5 L249 244.5 L249 248.8 L250 248.8 L250 246.5 L251 246.5 L251 245.5 L252 245.5 L252 241.5 L253 241.5 L253 247.3 L254 247.3 L254 248.5 L255 248.5 L255 253.5 L256 253.5 L256 252.9 L257 252.9 L257 246 L258 246 L258 234.5 L259 234.5 L259 244 L260 244 L260 237.5 L261 237.5 L261 243.9 L262 243.9 L262 238.5 L263 238.5 L263 246.5 L264 246.5 L264 253.1 L265 253.1 L265 251.5 L266 251.5 L266 255.4 L267 255.4 L267 255.7 L268 255.7 L268 251.5 L269 251.5 L269 252.2 L270 252.2 L270 245.5 L271 245.5 L271 249.1 L272 249.1 L272 245.4 L273 245.4 L273 238.5 L274 238.5 L274 247.6 L275 247.6 L275 244.5 L276 244.5 L276 250.1 L277 250.1 L277 248.5 L278 248.5 L278 252.7 L279 252.7 L279 250.5 L280 250.5 L280 253.8 L281 253.8 L281 252.5 L282 252.5 L282 254.8 L283 254.8 L283 253.5 L284 253.5 L284 255.9 L285 255.9 L285 255.5 L286 255.5 L286 254.5 L287 254.5 L287 254.1 L288 254.1 L288 251.5 L289 251.5 L289 252.1 L290 252.1 L290 245.8 L291 245.8 L291 242.5 L292 242.5 L292 238.5 L293 238.5 L293 245.4 L294 245.4 L294 241.5 L295 241.5 L295 246.8 L296 246.8 L296 241.4 L297 241.4 L297 236.3 L298 236.3 L298 229.8 L299 229.8 L299 241.4 L300 241.4 L300 234.5 L301 234.5 L301 229.5 L302 229.5 L302 241.2 L303 241.2 L303 237.5 L304 237.5 L304 244.1 L305 244.1 L305 241.5 L306 241.5 L306 245.5 L307 245.5 L307 250.6 L308 250.6 L308 248.5 L309 248.5 L309 251.5 L310 251.5 L310 254.7 L311 254.7 L311 253.1 L312 253.1 L312 246.5 L313 246.5 L313 245.9 L314 245.9 L314 233.7 L315 233.7 L315 237.5 L316 237.5 L316 245.7 L317 245.7 L317 238.5 L318 238.5 L318 238.5 L319 238.5 L319 244.5 L320 244.5 L320 234.5 L321 234.5 L321 245.4 L322 245.4 L322 240.5 L323 240.5 L323 245.9 L324 245.9 L324 243.5 L325 243.5 L325 236.5 L326 236.5 L326 236.8 L327 236.8 L327 225.5 L328 225.5 L328 235.5 L329 235.5 L329 245.7 L330 245.7 L330 240.5 L331 240.5 L331 245.6 L332 245.6 L332 238.5 L333 238.5 L333 240.8 L334 240.8 L334 234.5 L335 234.5 L335 246.2 L336 246.2 L336 243.5 L337 243.5 L337 250.7 L338 250.7 L338 248.5 L339 248.5 L339 253.6 L340 253.6 L340 251.5 L341 251.5 L341 255 L342 255 L342 253.5 L343 253.5 L343 254.7 L344 254.7 L344 252.5 L345 252.5 L345 253.1 L346 253.1 L346 247.5 L347 247.5 L347 244.5 L348 244.5 L348 236.5 L349 236.5 L349 241.5 L350 241.5 L350 248.2 L351 248.2 L351 243.5 L352 243.5 L352 233.5 L353 233.5 L353 219.8 L354 219.8 L354 230.5 L355 230.5 L355 238.4 L356 238.4 L356 233.5 L357 233.5 L357 237.5 L358 237.5 L358 244.7 L359 244.7 L359 236.5 L360 236.5 L360 238.5 L361 238.5 L361 241.5 L362 241.5 L362 243.5 L363 243.5 L363 247.5 L364 247.5 L364 252.8 L365 252.8 L365 250.5 L366 250.5 L366 250.5 L367 250.5 L367 245.5 L368 245.5 L368 236.7 L369 236.7 L369 245.9 L370 245.9 L370 239.5 L371 239.5 L371 240.5 L372 240.5 L372 243.5 L373 243.5 L373 245.5 L374 245.5 L374 249.3 L375 249.3 L375 243 L376 243 L376 247.5 L377 247.5 L377 253.2 L378 253.2 L378 250.5 L379 250.5 L379 248.5 L380 248.5 L380 247.1 L381 247.1 L381 232.3 L382 232.3 L382 226.1 L383 226.1 L383 236.5 L384 236.5 L384 246.6 L385 246.6 L385 244.5 L386 244.5 L386 246.5 L387 246.5 L387 248.1 L388 248.1 L388 238.5 L389 238.5 L389 246 L390 246 L390 251.6 L391 251.6 L391 252.5 L392 252.5 L392 253.1 L393 253.1 L393 250.5 L394 250.5 L394 244.5 L395 244.5 L395 237.5 L396 237.5 L396 241.6 L397 241.6 L397 243.5 L398 243.5 L398 248.2 L399 248.2 L399 246.5 L400 246.5 L400 248.5 L401 248.5 L401 244.5 L402 244.5 L402 238.5 L403 238.5 L403 246.1 L404 246.1 L404 249.5 L405 249.5 L405 253.4 L406 253.4 L406 252.8 L407 252.8 L407 248.2 L408 248.2 L408 238.5 L409 238.5 L409 247 L410 247 L410 245.5 L411 245.5 L411 249.9 L412 249.9 L412 248.5 L413 248.5 L413 253 L414 253 L414 250.5 L415 250.5 L415 249.5 L416 249.5 L416 250.7 L417 250.7 L417 244.5 L418 244.5 L418 251.5 L419 251.5 L419 255.5 L420 255.5 L420 254 L421 254 L421 253.2 L422 253.2 L422 248 L423 248 L423 237.5 L424 237.5 L424 245.3 L425 245.3 L425 243.5 L426 243.5 L426 248.7 L427 248.7 L427 246.5 L428 246.5 L428 251.3 L429 251.3 L429 248.5 L430 248.5 L430 252.9 L431 252.9 L431 250.5 L432 250.5 L432 245.5 L433 245.5 L433 248.1 L434 248.1 L434 238.5 L435 238.5 L435 246.7 L436 246.7 L436 240.5 L437 240.5 L437 233.8 L438 233.8 L438 242.5 L439 242.5 L439 249.6 L440 249.6 L440 246.5 L441 246.5 L441 252.4 L442 252.4 L442 249.5 L443 249.5 L443 253.5 L444 253.5 L444 253.9 L445 253.9 L445 252.5 L446 252.5 L446 254.5 L447 254.5 L447 256.2 L448 256.2 L448 256 L449 256 L449 250.5 L450 250.5 L450 248.9 L451 248.9 L451 241.5 L452 241.5 L452 239.5 L453 239.5 L453 244.5 L454 244.5 L454 250 L455 250 L455 246.5 L456 246.5 L456 247.5 L457 247.5 L457 248.9 L458 248.9 L458 244.5 L459 244.5 L459 250.5 L460 250.5 L460 254.3 L461 254.3 L461 251 L462 251 L462 246.5 L463 246.5 L463 244.5 L464 244.5 L464 243.5 L465 243.5 L465 245.6 L466 245.6 L466 238.5 L467 238.5 L467 246.5 L468 246.5 L468 252 L469 252 L469 250.5 L470 250.5 L470 252.2 L471 252.2 L471 249.5 L472 249.5 L472 243.5 L473 243.5 L473 249.9 L474 249.9 L474 250.5 L475 250.5 L475 254.8 L476 254.8 L476 254.4 L477 254.4 L477 254.1 L478 254.1 L478 250.5 L479 250.5 L479 243.5 L480 243.5 L480 238.5 L481 238.5 L481 245 L482 245 L482 243.5 L483 243.5 L483 249.7 L484 249.7 L484 246.5 L485 246.5 L485 251.9 L486 251.9 L486 248.5 L487 248.5 L487 249 L488 249 L488 245.5 L489 245.5 L489 251.5 L490 251.5 L490 255.6 L491 255.6 L491 254.1 L492 254.1 L492 246.5 L493 246.5 L493 248.5 L494 248.5 L494 237.5 L495 237.5 L495 247.7 L496 247.7 L496 244.5 L497 244.5 L497 251.6 L498 251.6 L498 248.5 L499 248.5 L499 252.8 L500 252.8 L500 250.5 L501 250.5 L501 253.5 L502 253.5 L502 250.5 L503 250.5 L503 254.4 L504 254.4 L504 253.5 L505 253.5 L505 256.4 L506 256.4 L506 256.6 L507 256.6 L507 254.5 L508 254.5 L508 238.5 L509 238.5 L509 219.5 L510 219.5 L510 224.7 L511 224.7 L511 228.4 L512 228.4 L512 230.5 L513 230.5 L513 233.5 L514 233.5 L514 242.1 L515 242.1 L515 236.5 L516 236.5 L516 240.5 L517 240.5 L517 246.9 L518 246.9 L518 243.5 L519 243.5 L519 238.5 L520 238.5 L520 240.4 L521 240.4 L521 228.5 L522 228.5 L522 212.5 L523 212.5 L523 222.5 L524 222.5 L524 233.5 L525 233.5 L525 220.5 L526 220.5 L526 221.5 L527 221.5 L527 232.5 L528 232.5 L528 238.5 L529 238.5 L529 245.5 L530 245.5 L530 251.6 L531 251.6 L531 250.5 L532 250.5 L532 244.5 L533 244.5 L533 246.7 L534 246.7 L534 238.5 L535 238.5 L535 232.5 L536 232.5 L536 225 L537 225 L537 238.6 L538 238.6 L538 229.5 L539 229.5 L539 228.5 L540 228.5 L540 238.2 L541 238.2 L541 234.5 L542 234.5 L542 243.4 L543 243.4 L543 236.5 L544 236.5 L544 228.5 L545 228.5 L545 240.7 L546 240.7 L546 234.5 L547 234.5 L547 242.1 L548 242.1 L548 238.5 L549 238.5 L549 232.5 L550 232.5 L550 221.7 L551 221.7 L551 236.2 L552 236.2 L552 224 L553 224 L553 222.5 L554 222.5 L554 227.5 L555 227.5 L555 236.9 L556 236.9 L556 230.5 L557 230.5 L557 236.5 L558 236.5 L558 243.5 L559 243.5 L559 240.5 L560 240.5 L560 246.5 L561 246.5 L561 250.5 L562 250.5 L562 251.6 L563 251.6 L563 246.5 L564 246.5 L564 249.9 L565 249.9 L565 241.5 L566 241.5 L566 248.1 L567 248.1 L567 246.5 L568 246.5 L568 248.5 L569 248.5 L569 248.7 L570 248.7 L570 242.5 L571 242.5 L571 236.5 L572 236.5 L572 244.5 L573 244.5 L573 237.5 L574 237.5 L574 233.5 L575 233.5 L575 241.9 L576 241.9 L576 238.5 L577 238.5 L577 234.5 L578 234.5 L578 238.1 L579 238.1 L579 230.5 L580 230.5 L580 236.5 L581 236.5 L581 243.7 L582 243.7 L582 240.5 L583 240.5 L583 244.5 L584 244.5 L584 250 L585 250 L585 246.5 L586 246.5 L586 245.3 L587 245.3 L587 240.5 L588 240.5 L588 232.5 L589 232.5 L589 240.5 L590 240.5 L590 248.8 L591 248.8 L591 243.5 L592 243.5 L592 238.5 L593 238.5 L593 242.1 L594 242.1 L594 230.5 L595 230.5 L595 237.5 L596 237.5 L596 246.3 L597 246.3 L597 240.5 L598 240.5 L598 243.4 L599 243.4 L599 238.5 L600 238.5 L600 242.3 L601 242.3 L601 233.5 L602 233.5 L602 237.5 L603 237.5 L603 242.5 L604 242.5 L604 238.5 L605 238.5 L605 226.5 L606 226.5 L606 236.8 L607 236.8 L607 231.5 L608 231.5 L608 226.5 L609 226.5 L609 232.5 L610 232.5 L610 243.4 L611 243.4 L611 236.5 L612 236.5 L612 242.5 L613 242.5 L613 250.5 L614 250.5 L614 246.5 L615 246.5 L615 254.2 L616 254.2 L616 253.5 L617 253.5 L617 256.5 L618 256.5 L618 255.7 L619 255.7 L619 250.5 L620 250.5 L620 248.3 L621 248.3 L621 240.5 L622 240.5 L622 228.5 L623 228.5 L623 235.5 L624 235.5 L624 244.5 L625 244.5 L625 238.5 L626 238.5 L626 234.6 L627 234.6 L627 230.5 L628 230.5 L628 237.5 L629 237.5 L629 245 L630 245 L630 240.5 L631 240.5 L631 240.5 L632 240.5 L632 243.1 L633 243.1 L633 238.5 L634 238.5 L634 241.1 L635 241.1 L635 233.5 L636 233.5 L636 226.5 L637 226.5 L637 231.5 L638 231.5 L638 241.2 L639 241.2 L639 233.5 L640 233.5 L640 237.5 L641 237.5 L641 244 L642 244 L642 238.5 L643 238.5 L643 244.5 L644 244.5 L644 248.5 L645 248.5 L645 243.5 L646 243.5 L646 245.9 L647 245.9 L647 236.5 L648 236.5 L648 237.5 L649 237.5 L649 243.4 L650 243.4 L650 236.5 L651 236.5 L651 240.3 L652 240.3 L652 232.5 L653 232.5 L653 239.1 L654 239.1 L654 222.5 L655 222.5 L655 237 L656 237 L656 236.5 L657 236.5 L657 243.5 L658 243.5 L658 246.9 L659 246.9 L659 237.5 L660 237.5 L660 207.5 L661 207.5 L661 232.5 L662 232.5 L662 237.7 L663 237.7 L663 228.5 L664 228.5 L664 237.4 L665 237.4 L665 233.5 L666 233.5 L666 236.5 L667 236.5 L667 241.5 L668 241.5 L668 249.4 L669 249.4 L669 246.5 L670 246.5 L670 251.5 L671 251.5 L671 255.9 L672 255.9 L672 255 L673 255 L673 253.7 L674 253.7 L674 249.5 L675 249.5 L675 243.5 L676 243.5 L676 247.3 L677 247.3 L677 242.5 L678 242.5 L678 241.5 L679 241.5 L679 245.5 L680 245.5 L680 250.1 L681 250.1 L681 246.5 L682 246.5 L682 240.5 L683 240.5 L683 222.5 L684 222.5 L684 238.7 L685 238.7 L685 248.4 L686 248.4 L686 246.5 L687 246.5 L687 245.5 L688 245.5 L688 248.1 L689 248.1 L689 240 L690 240 L690 226.5 L691 226.5 L691 230 L692 230 L692 228.5 L693 228.5 L693 283.5 L692 283.5 L692 282.6 L691 282.6 L691 283.5 L690 283.5 L690 277.5 L689 277.5 L689 271.6 L688 271.6 L688 274.5 L687 274.5 L687 273.5 L686 273.5 L686 269 L685 269 L685 274.9 L684 274.9 L684 278.5 L683 278.5 L683 274.5 L682 274.5 L682 273.5 L681 273.5 L681 269.7 L680 269.7 L680 273.5 L679 273.5 L679 276.5 L678 276.5 L678 275.5 L677 275.5 L677 268.5 L676 268.5 L676 273.5 L675 273.5 L675 267.5 L674 267.5 L674 263.5 L673 263.5 L673 261.3 L672 261.3 L672 260.7 L671 260.7 L671 264.5 L670 264.5 L670 270.5 L669 270.5 L669 267 L668 267 L668 273.5 L667 273.5 L667 276.5 L666 276.5 L666 278.5 L665 278.5 L665 273 L664 273 L664 283.5 L663 283.5 L663 274.8 L662 274.8 L662 282.5 L661 282.5 L661 296.1 L660 296.1 L660 278.5 L659 278.5 L659 271.4 L658 271.4 L658 278.5 L657 278.5 L657 280.5 L656 280.5 L656 278 L655 278 L655 287.5 L654 287.5 L654 276.7 L653 276.7 L653 280.5 L652 280.5 L652 273.2 L651 273.2 L651 276.5 L650 276.5 L650 270.6 L649 270.6 L649 278.5 L648 278.5 L648 284.5 L647 284.5 L647 277 L646 277 L646 275.5 L645 275.5 L645 267 L644 267 L644 270.5 L643 270.5 L643 278.5 L642 278.5 L642 274.1 L641 274.1 L641 278.5 L640 278.5 L640 278.5 L639 278.5 L639 273.7 L638 273.7 L638 278.5 L637 278.5 L637 280.5 L636 280.5 L636 279.5 L635 279.5 L635 273.7 L634 273.7 L634 280.5 L633 280.5 L633 272.6 L632 272.6 L632 277.5 L631 277.5 L631 276.5 L630 276.5 L630 271 L629 271 L629 277.5 L628 277.5 L628 280.5 L627 280.5 L627 278.9 L626 278.9 L626 278.5 L625 278.5 L625 271.8 L624 271.8 L624 280.5 L623 280.5 L623 285.5 L622 285.5 L622 276.5 L621 276.5 L621 269.1 L620 269.1 L620 268.5 L619 268.5 L619 261.8 L618 261.8 L618 260.5 L617 260.5 L617 263.5 L616 263.5 L616 262.9 L615 262.9 L615 268.5 L614 268.5 L614 266.3 L613 266.3 L613 272.5 L612 272.5 L612 278.5 L611 278.5 L611 274 L610 274 L610 282.5 L609 282.5 L609 288.5 L608 288.5 L608 282.5 L607 282.5 L607 275 L606 275 L606 280.5 L605 280.5 L605 273.5 L604 273.5 L604 269.9 L603 269.9 L603 274.5 L602 274.5 L602 278.5 L601 278.5 L601 273.9 L600 273.9 L600 274.5 L599 274.5 L599 268.7 L598 268.7 L598 270.5 L597 270.5 L597 267.6 L596 267.6 L596 275.5 L595 275.5 L595 284.5 L594 284.5 L594 273.8 L593 273.8 L593 276.5 L592 276.5 L592 270.5 L591 270.5 L591 266.8 L590 266.8 L590 274.5 L589 274.5 L589 284.5 L588 284.5 L588 276.5 L587 276.5 L587 269.6 L586 269.6 L586 268.5 L585 268.5 L585 265.3 L584 265.3 L584 271.5 L583 271.5 L583 278.5 L582 278.5 L582 273 L581 273 L581 282.5 L580 282.5 L580 290.5 L579 290.5 L579 282.7 L578 282.7 L578 282.5 L577 282.5 L577 276.1 L576 276.1 L576 274.1 L575 274.1 L575 278.5 L574 278.5 L574 275.5 L573 275.5 L573 271.9 L572 271.9 L572 276.5 L571 276.5 L571 271.5 L570 271.5 L570 266.4 L569 266.4 L569 266.5 L568 266.5 L568 268.5 L567 268.5 L567 266.4 L566 266.4 L566 275.5 L565 275.5 L565 267.8 L564 267.8 L564 270.5 L563 270.5 L563 263.6 L562 263.6 L562 264.5 L561 264.5 L561 267.5 L560 267.5 L560 273.5 L559 273.5 L559 271.6 L558 271.6 L558 278.5 L557 278.5 L557 286.5 L556 286.5 L556 278.1 L555 278.1 L555 291.5 L554 291.5 L554 298.3 L553 298.3 L553 295.4 L552 295.4 L552 282.9 L551 282.9 L551 293.5 L550 293.5 L550 282.5 L549 282.5 L549 273.5 L548 273.5 L548 270.5 L547 270.5 L547 276.5 L546 276.5 L546 273.4 L545 273.4 L545 280.5 L544 280.5 L544 277.5 L543 277.5 L543 272.6 L542 272.6 L542 280.5 L541 280.5 L541 278 L540 278 L540 288.5 L539 288.5 L539 284.5 L538 284.5 L538 277.6 L537 277.6 L537 283.5 L536 283.5 L536 280.5 L535 280.5 L535 278.5 L534 278.5 L534 270.7 L533 270.7 L533 271.5 L532 271.5 L532 266.5 L531 266.5 L531 264.5 L530 264.5 L530 271.5 L529 271.5 L529 278.5 L528 278.5 L528 282.5 L527 282.5 L527 288.5 L526 288.5 L526 288.5 L525 288.5 L525 278.8 L524 278.8 L524 290.5 L523 290.5 L523 300 L522 300 L522 286.5 L521 286.5 L521 275.7 L520 275.7 L520 276.5 L519 276.5 L519 270.5 L518 270.5 L518 268.6 L517 268.6 L517 274.5 L516 274.5 L516 280.5 L515 280.5 L515 276.9 L514 276.9 L514 283.5 L513 283.5 L513 288.5 L512 288.5 L512 287 L511 287 L511 296 L510 296 L510 303.5 L509 303.5 L509 280.5 L508 280.5 L508 262.5 L507 262.5 L507 260.4 L506 260.4 L506 260.6 L505 260.6 L505 263.5 L504 263.5 L504 262.7 L503 262.7 L503 270.5 L502 270.5 L502 265.6 L501 265.6 L501 266.5 L500 266.5 L500 263.7 L499 263.7 L499 266.5 L498 266.5 L498 264.4 L497 264.4 L497 269.5 L496 269.5 L496 267.7 L495 267.7 L495 275.5 L494 275.5 L494 266.9 L493 266.9 L493 268.5 L492 268.5 L492 262.5 L491 262.5 L491 261.4 L490 261.4 L490 265.5 L489 265.5 L489 273.5 L488 273.5 L488 268.3 L487 268.3 L487 268.5 L486 268.5 L486 265.2 L485 265.2 L485 268.5 L484 268.5 L484 266.5 L483 266.5 L483 271.5 L482 271.5 L482 271.4 L481 271.4 L481 279.5 L480 279.5 L480 272.5 L479 272.5 L479 266.5 L478 266.5 L478 263.8 L477 263.8 L477 262.6 L476 262.6 L476 261.3 L475 261.3 L475 264.5 L474 264.5 L474 263.6 L473 263.6 L473 268.5 L472 268.5 L472 265.5 L471 265.5 L471 263.4 L470 263.4 L470 264.5 L469 264.5 L469 263 L468 263 L468 267.5 L467 267.5 L467 275.5 L466 275.5 L466 269.2 L465 269.2 L465 270.5 L464 270.5 L464 268.5 L463 268.5 L463 267.5 L462 267.5 L462 265 L461 265 L461 261.6 L460 261.6 L460 264.5 L459 264.5 L459 266.5 L458 266.5 L458 264.2 L457 264.2 L457 266.5 L456 266.5 L456 268.5 L455 268.5 L455 265.4 L454 265.4 L454 269.5 L453 269.5 L453 273.5 L452 273.5 L452 272 L451 272 L451 264.4 L450 264.4 L450 264.5 L449 264.5 L449 261 L448 261 L448 260.7 L447 260.7 L447 261.5 L446 261.5 L446 263.5 L445 263.5 L445 262.2 L444 262.2 L444 262.6 L443 262.6 L443 265.5 L442 265.5 L442 263 L441 263 L441 266.5 L440 266.5 L440 265.2 L439 265.2 L439 271 L438 271 L438 287.8 L437 287.8 L437 276.5 L436 276.5 L436 270.4 L435 270.4 L435 273.5 L434 273.5 L434 267.1 L433 267.1 L433 268.5 L432 268.5 L432 264.5 L431 264.5 L431 262.8 L430 262.8 L430 266.5 L429 266.5 L429 264.2 L428 264.2 L428 268.5 L427 268.5 L427 265.3 L426 265.3 L426 271.5 L425 271.5 L425 269 L424 269 L424 279.5 L423 279.5 L423 269 L422 269 L422 264.1 L421 264.1 L421 262.4 L420 262.4 L420 261.1 L419 261.1 L419 263.5 L418 263.5 L418 268.5 L417 268.5 L417 264.4 L416 264.4 L416 265.5 L415 265.5 L415 265.5 L414 265.5 L414 264.3 L413 264.3 L413 268.5 L412 268.5 L412 265.6 L411 265.6 L411 270.5 L410 270.5 L410 268.7 L409 268.7 L409 276.5 L408 276.5 L408 268.5 L407 268.5 L407 263.8 L406 263.8 L406 263 L405 263 L405 264.5 L404 264.5 L404 267.1 L403 267.1 L403 272.5 L402 272.5 L402 268.5 L401 268.5 L401 266.5 L400 266.5 L400 268.5 L399 268.5 L399 266.2 L398 266.2 L398 270.5 L397 270.5 L397 272.5 L396 272.5 L396 282.5 L395 282.5 L395 272.5 L394 272.5 L394 266.5 L393 266.5 L393 263.8 L392 263.8 L392 263.5 L391 263.5 L391 263.6 L390 263.6 L390 269.5 L389 269.5 L389 278.5 L388 278.5 L388 268.4 L387 268.4 L387 268.5 L386 268.5 L386 268.5 L385 268.5 L385 267.5 L384 267.5 L384 276.5 L383 276.5 L383 289.5 L382 289.5 L382 283 L381 283 L381 270.3 L380 270.3 L380 268.5 L379 268.5 L379 266.5 L378 266.5 L378 264.6 L377 264.6 L377 268.5 L376 268.5 L376 273.1 L375 273.1 L375 267.5 L374 267.5 L374 271.5 L373 271.5 L373 272.5 L372 272.5 L372 273.5 L371 273.5 L371 276.5 L370 276.5 L370 272.2 L369 272.2 L369 283.5 L368 283.5 L368 272.5 L367 272.5 L367 265.8 L366 265.8 L366 264.5 L365 264.5 L365 262.7 L364 262.7 L364 266.5 L363 266.5 L363 268.5 L362 268.5 L362 269.5 L361 269.5 L361 270 L360 270 L360 270.5 L359 270.5 L359 267.6 L358 267.6 L358 271.5 L357 271.5 L357 273.5 L356 273.5 L356 269.6 L355 269.6 L355 278.5 L354 278.5 L354 291.5 L353 291.5 L353 279.2 L352 279.2 L352 270.5 L351 270.5 L351 266.2 L350 266.2 L350 272.5 L349 272.5 L349 276.5 L348 276.5 L348 270.5 L347 270.5 L347 268.5 L346 268.5 L346 264.3 L345 264.3 L345 264.5 L344 264.5 L344 262.7 L343 262.7 L343 262.5 L342 262.5 L342 261.1 L341 261.1 L341 262.5 L340 262.5 L340 261.6 L339 261.6 L339 263.5 L338 263.5 L338 262.7 L337 262.7 L337 268.5 L336 268.5 L336 267.4 L335 267.4 L335 278.5 L334 278.5 L334 272 L333 272 L333 274.5 L332 274.5 L332 270.9 L331 270.9 L331 273.5 L330 273.5 L330 269.2 L329 269.2 L329 276.5 L328 276.5 L328 282.5 L327 282.5 L327 272.1 L326 272.1 L326 274.5 L325 274.5 L325 270.5 L324 270.5 L324 267.9 L323 267.9 L323 274.5 L322 274.5 L322 272.1 L321 272.1 L321 283.5 L320 283.5 L320 274.7 L319 274.7 L319 276.5 L318 276.5 L318 273.5 L317 273.5 L317 269.6 L316 269.6 L316 276.5 L315 276.5 L315 283 L314 283 L314 269.9 L313 269.9 L313 270.5 L312 270.5 L312 263.9 L311 263.9 L311 262.6 L310 262.6 L310 266.5 L309 266.5 L309 273.5 L308 273.5 L308 268.4 L307 268.4 L307 273.5 L306 273.5 L306 273.5 L305 273.5 L305 270.3 L304 270.3 L304 275.5 L303 275.5 L303 270.9 L302 270.9 L302 278.5 L301 278.5 L301 278.5 L300 278.5 L300 273.4 L299 273.4 L299 283.5 L298 283.5 L298 279.8 L297 279.8 L297 275.6 L296 275.6 L296 270.4 L295 270.4 L295 276.5 L294 276.5 L294 274.4 L293 274.4 L293 283.5 L292 283.5 L292 273.5 L291 273.5 L291 267.7 L290 267.7 L290 262.7 L289 262.7 L289 264.5 L288 264.5 L288 262.6 L287 262.6 L287 262.5 L286 262.5 L286 261.6 L285 261.6 L285 261 L284 261 L284 262.5 L283 262.5 L283 261.3 L282 261.3 L282 263.5 L281 263.5 L281 262.2 L280 262.2 L280 264.5 L279 264.5 L279 262.8 L278 262.8 L278 266.5 L277 266.5 L277 265.1 L276 265.1 L276 270.5 L275 270.5 L275 267.8 L274 267.8 L274 277.5 L273 277.5 L273 271.7 L272 271.7 L272 267.4 L271 267.4 L271 269.5 L270 269.5 L270 263.9 L269 263.9 L269 264.5 L268 264.5 L268 260.7 L267 260.7 L267 260.6 L266 260.6 L266 263.5 L265 263.5 L265 262.9 L264 262.9 L264 266.5 L263 266.5 L263 270.5 L262 270.5 L262 267.3 L261 267.3 L261 274.5 L260 274.5 L260 273.2 L259 273.2 L259 283.5 L258 283.5 L258 271.2 L257 271.2 L257 263.7 L256 263.7 L256 261.6 L255 261.6 L255 266.5 L254 266.5 L254 268.6 L253 268.6 L253 272.5 L252 272.5 L252 269.5 L251 269.5 L251 268.5 L250 268.5 L250 265.8 L249 265.8 L249 270.5 L248 270.5 L248 267.7 L247 267.7 L247 273.5 L246 273.5 L246 269.4 L245 269.4 L245 280.5 L244 280.5 L244 283.8 L243 283.8 L243 295.1 L242 295.1 L242 274.5 L241 274.5 L241 268.5 L240 268.5 L240 264.9 L239 264.9 L239 269.5 L238 269.5 L238 272.5 L237 272.5 L237 268.9 L236 268.9 L236 268.5 L235 268.5 L235 265.8 L234 265.8 L234 266.5 L233 266.5 L233 265.3 L232 265.3 L232 270.5 L231 270.5 L231 268.2 L230 268.2 L230 277.5 L229 277.5 L229 266.9 L228 266.9 L228 263.5 L227 263.5 L227 260.3 L226 260.3 L226 259.6 L225 259.6 L225 260.1 L224 260.1 L224 262.5 L223 262.5 L223 261.7 L222 261.7 L222 266.5 L221 266.5 L221 265.7 L220 265.7 L220 265.3 L219 265.3 L219 270.5 L218 270.5 L218 276.5 L217 276.5 L217 270.2 L216 270.2 L216 267.3 L215 267.3 L215 268.5 L214 268.5 L214 265.1 L213 265.1 L213 266.5 L212 266.5 L212 264.4 L211 264.4 L211 268.5 L210 268.5 L210 266.6 L209 266.6 L209 269.5 L208 269.5 L208 267 L207 267 L207 270.5 L206 270.5 L206 272.5 L205 272.5 L205 275.5 L204 275.5 L204 279.5 L203 279.5 L203 281.2 L202 281.2 L202 273.5 L201 273.5 L201 267.5 L200 267.5 L200 266.5 L199 266.5 L199 266.5 L198 266.5 L198 268.5 L197 268.5 L197 265 L196 265 L196 266.5 L195 266.5 L195 266.5 L194 266.5 L194 267.5 L193 267.5 L193 269.5 L192 269.5 L192 273.5 L191 273.5 L191 276.5 L190 276.5 L190 280.5 L189 280.5 L189 286.5 L188 286.5 L188 303 L187 303 L187 268.5 L186 268.5 L186 266.5 L185 266.5 L185 265 L184 265 L184 263.5 L183 263.5 L183 261.8 L182 261.8 L182 263.5 L181 263.5 L181 263.5 L180 263.5 L180 261.9 L179 261.9 L179 264.5 L178 264.5 L178 266.5 L177 266.5 L177 264.1 L176 264.1 L176 267.5 L175 267.5 L175 268.5 L174 268.5 L174 267.5 L173 267.5 L173 266.5 L172 266.5 L172 265 L171 265 L171 262 L170 262 L170 259.9 L169 259.9 L169 260.5 L168 260.5 L168 261.5 L167 261.5 L167 263.5 L166 263.5 L166 266.5 L165 266.5 L165 270.5 L164 270.5 L164 274.5 L163 274.5 L163 280.5 L162 280.5 L162 284.5 L161 284.5 L161 288.5 L160 288.5 L160 294.5 L159 294.5 L159 298.9 L158 298.9 L158 263.5 L157 263.5 L157 262 L156 262 L156 262.5 L155 262.5 L155 262.5 L154 262.5 L154 262.3 L153 262.3 L153 264.5 L152 264.5 L152 261.5 L151 261.5 L151 262.5 L150 262.5 L150 261.2 L149 261.2 L149 262.5 L148 262.5 L148 263.5 L147 263.5 L147 268.5 L146 268.5 L146 265.5 L145 265.5 L145 262.5 L144 262.5 L144 261.5 L143 261.5 L143 260.7 L142 260.7 L142 261.5 L141 261.5 L141 260.6 L140 260.6 L140 261.5 L139 261.5 L139 262.5 L138 262.5 L138 263.5 L137 263.5 L137 265.5 L136 265.5 L136 267.5 L135 267.5 L135 270.5 L134 270.5 L134 274.5 L133 274.5 L133 278.5 L132 278.5 L132 284.5 L131 284.5 L131 298.9 L130 298.9 L130 259 L129 259 L129 258.9 L128 258.9 L128 258.9 L127 258.9 L127 258.9 L126 258.9 L126 258.9 L125 258.9 L125 258.9 L124 258.9 L124 258.9 L123 258.9 L123 259 L122 259 L122 259.1 L121 259.1 L121 259.3 L120 259.3 L120 259.1 L119 259.1 L119 259.1 L118 259.1 L118 259.1 L117 259.1 L117 259.5 L116 259.5 L116 259.4 L115 259.4 L115 260.5 L114 260.5 L114 261 L113 261 L113 261.5 L112 261.5 L112 262.5 L111 262.5 L111 264.5 L110 264.5 L110 266.5 L109 266.5 L109 268.5 L108 268.5 L108 270.5 L107 270.5 L107 274.5 L106 274.5 L106 278.5 L105 278.5 L105 282.5 L104 282.5 L104 286.5 L103 286.5 L103 289 L102 289 L102 264.5 L101 264.5 L101 262.5 L100 262.5 L100 260.9 L99 260.9 L99 262.5 L98 262.5 L98 265.5 L97 265.5 L97 262.8 L96 262.8 L96 262.5 L95 262.5 L95 261.2 L94 261.2 L94 263.5 L93 263.5 L93 262.3 L92 262.3 L92 264.5 L91 264.5 L91 263.9 L90 263.9 L90 268.5 L89 268.5 L89 263.3 L88 263.3 L88 263.5 L87 263.5 L87 266.5 L86 266.5 L86 263.9 L85 263.9 L85 264.5 L84 264.5 L84 262.9 L83 262.9 L83 264.5 L82 264.5 L82 264.5 L81 264.5 L81 265.5 L80 265.5 L80 267.5 L79 267.5 L79 268.5 L78 268.5 L78 270.5 L77 270.5 L77 272.5 L76 272.5 L76 275.5 L75 275.5 L75 297.5 L74 297.5 L74 259 L73 259 L73 258.9 L72 258.9 L72 258.9 L71 258.9 L71 258.9 L70 258.9 L70 258.9 L69 258.9 L69 258.8 L68 258.8 L68 258.8 L67 258.8 L67 258.8 L66 258.8 L66 258.8 L65 258.8 L65 258.8 L64 258.8 L64 258.8 L63 258.8 L63 258.8 L62 258.8 L62 258.8 L61 258.8 L61 258.9 L60 258.9 L60 258.9 L59 258.9 L59 258.9 L58 258.9 L58 259 L57 259Z" fill="#161616"/>

<rect x="202" y="160" width="171" height="196" fill="#444"/>
<rect x="202" y="210" width="171" height="1" fill="#f4f4f4"/>
<rect x="202" y="306" width="171" height="1" fill="#f4f4f4"/>
<rect x="202" y="258" width="171" height="1" fill="#8a8a8a"/>

<path d="M202 231.5 L203 231.5 L203 233.5 L204 233.5 L204 237.5 L205 237.5 L205 241.5 L206 241.5 L206 243.5 L207 243.5 L207 250.6 L208 250.6 L208 247.5 L209 247.5 L209 250.5 L210 250.5 L210 248.5 L211 248.5 L211 252.1 L212 252.1 L212 249.5 L213 249.5 L213 250.1 L214 250.1 L214 244.5 L215 244.5 L215 246.3 L216 246.3 L216 238.1 L217 238.1 L217 233.5 L218 233.5 L218 242.5 L219 242.5 L219 249.2 L220 249.2 L220 251.1 L221 251.1 L221 248.5 L222 248.5 L222 254.6 L223 254.6 L223 253.5 L224 253.5 L224 256.6 L225 256.6 L225 257.3 L226 257.3 L226 256.7 L227 256.7 L227 253.5 L228 253.5 L228 250.7 L229 250.7 L229 240.5 L230 240.5 L230 247.8 L231 247.8 L231 245.5 L232 245.5 L232 250.6 L233 250.6 L233 248.5 L234 248.5 L234 251.1 L235 251.1 L235 246.5 L236 246.5 L236 246.7 L237 246.7 L237 241.5 L238 241.5 L238 246.5 L239 246.5 L239 252 L240 252 L240 248.5 L241 248.5 L241 240.5 L242 240.5 L242 222.1 L243 222.1 L243 229 L244 229 L244 232.5 L245 232.5 L245 243 L246 243 L246 238.5 L247 238.5 L247 248 L248 248 L248 244.5 L249 244.5 L249 248.8 L250 248.8 L250 246.5 L251 246.5 L251 245.5 L252 245.5 L252 241.5 L253 241.5 L253 247.3 L254 247.3 L254 248.5 L255 248.5 L255 253.5 L256 253.5 L256 252.9 L257 252.9 L257 246 L258 246 L258 234.5 L259 234.5 L259 244 L260 244 L260 237.5 L261 237.5 L261 243.9 L262 243.9 L262 238.5 L263 238.5 L263 246.5 L264 246.5 L264 253.1 L265 253.1 L265 251.5 L266 251.5 L266 255.4 L267 255.4 L267 255.7 L268 255.7 L268 251.5 L269 251.5 L269 252.2 L270 252.2 L270 245.5 L271 245.5 L271 249.1 L272 249.1 L272 245.4 L273 245.4 L273 238.5 L274 238.5 L274 247.6 L275 247.6 L275 244.5 L276 244.5 L276 250.1 L277 250.1 L277 248.5 L278 248.5 L278 252.7 L279 252.7 L279 250.5 L280 250.5 L280 253.8 L281 253.8 L281 252.5 L282 252.5 L282 254.8 L283 254.8 L283 253.5 L284 253.5 L284 255.9 L285 255.9 L285 255.5 L286 255.5 L286 254.5 L287 254.5 L287 254.1 L288 254.1 L288 251.5 L289 251.5 L289 252.1 L290 252.1 L290 245.8 L291 245.8 L291 242.5 L292 242.5 L292 238.5 L293 238.5 L293 245.4 L294 245.4 L294 241.5 L295 241.5 L295 246.8 L296 246.8 L296 241.4 L297 241.4 L297 236.3 L298 236.3 L298 229.8 L299 229.8 L299 241.4 L300 241.4 L300 234.5 L301 234.5 L301 229.5 L302 229.5 L302 241.2 L303 241.2 L303 237.5 L304 237.5 L304 244.1 L305 244.1 L305 241.5 L306 241.5 L306 245.5 L307 245.5 L307 250.6 L308 250.6 L308 248.5 L309 248.5 L309 251.5 L310 251.5 L310 254.7 L311 254.7 L311 253.1 L312 253.1 L312 246.5 L313 246.5 L313 245.9 L314 245.9 L314 233.7 L315 233.7 L315 237.5 L316 237.5 L316 245.7 L317 245.7 L317 238.5 L318 238.5 L318 238.5 L319 238.5 L319 244.5 L320 244.5 L320 234.5 L321 234.5 L321 245.4 L322 245.4 L322 240.5 L323 240.5 L323 245.9 L324 245.9 L324 243.5 L325 243.5 L325 236.5 L326 236.5 L326 236.8 L327 236.8 L327 225.5 L328 225.5 L328 235.5 L329 235.5 L329 245.7 L330 245.7 L330 240.5 L331 240.5 L331 245.6 L332 245.6 L332 238.5 L333 238.5 L333 240.8 L334 240.8 L334 234.5 L335 234.5 L335 246.2 L336 246.2 L336 243.5 L337 243.5 L337 250.7 L338 250.7 L338 248.5 L339 248.5 L339 253.6 L340 253.6 L340 251.5 L341 251.5 L341 255 L342 255 L342 253.5 L343 253.5 L343 254.7 L344 254.7 L344 252.5 L345 252.5 L345 253.1 L346 253.1 L346 247.5 L347 247.5 L347 244.5 L348 244.5 L348 236.5 L349 236.5 L349 241.5 L350 241.5 L350 248.2 L351 248.2 L351 243.5 L352 243.5 L352 233.5 L353 233.5 L353 219.8 L354 219.8 L354 230.5 L355 230.5 L355 238.4 L356 238.4 L356 233.5 L357 233.5 L357 237.5 L358 237.5 L358 244.7 L359 244.7 L359 236.5 L360 236.5 L360 238.5 L361 238.5 L361 241.5 L362 241.5 L362 243.5 L363 243.5 L363 247.5 L364 247.5 L364 252.8 L365 252.8 L365 250.5 L366 250.5 L366 250.5 L367 250.5 L367 245.5 L368 245.5 L368 236.7 L369 236.7 L369 245.9 L370 245.9 L370 239.5 L371 239.5 L371 240.5 L372 240.5 L372 243.5 L373 243.5 L373 272.5 L372 272.5 L372 273.5 L371 273.5 L371 276.5 L370 276.5 L370 272.2 L369 272.2 L369 283.5 L368 283.5 L368 272.5 L367 272.5 L367 265.8 L366 265.8 L366 264.5 L365 264.5 L365 262.7 L364 262.7 L364 266.5 L363 266.5 L363 268.5 L362 268.5 L362 269.5 L361 269.5 L361 270 L360 270 L360 270.5 L359 270.5 L359 267.6 L358 267.6 L358 271.5 L357 271.5 L357 273.5 L356 273.5 L356 269.6 L355 269.6 L355 278.5 L354 278.5 L354 291.5 L353 291.5 L353 279.2 L352 279.2 L352 270.5 L351 270.5 L351 266.2 L350 266.2 L350 272.5 L349 272.5 L349 276.5 L348 276.5 L348 270.5 L347 270.5 L347 268.5 L346 268.5 L346 264.3 L345 264.3 L345 264.5 L344 264.5 L344 262.7 L343 262.7 L343 262.5 L342 262.5 L342 261.1 L341 261.1 L341 262.5 L340 262.5 L340 261.6 L339 261.6 L339 263.5 L338 263.5 L338 262.7 L337 262.7 L337 268.5 L336 268.5 L336 267.4 L335 267.4 L335 278.5 L334 278.5 L334 272 L333 272 L333 274.5 L332 274.5 L332 270.9 L331 270.9 L331 273.5 L330 273.5 L330 269.2 L329 269.2 L329 276.5 L328 276.5 L328 282.5 L327 282.5 L327 272.1 L326 272.1 L326 274.5 L325 274.5 L325 270.5 L324 270.5 L324 267.9 L323 267.9 L323 274.5 L322 274.5 L322 272.1 L321 272.1 L321 283.5 L320 283.5 L320 274.7 L319 274.7 L319 276.5 L318 276.5 L318 273.5 L317 273.5 L317 269.6 L316 269.6 L316 276.5 L315 276.5 L315 283 L314 283 L314 269.9 L313 269.9 L313 270.5 L312 270.5 L312 263.9 L311 263.9 L311 262.6 L310 262.6 L310 266.5 L309 266.5 L309 273.5 L308 273.5 L308 268.4 L307 268.4 L307 273.5 L306 273.5 L306 273.5 L305 273.5 L305 270.3 L304 270.3 L304 275.5 L303 275.5 L303 270.9 L302 270.9 L302 278.5 L301 278.5 L301 278.5 L300 278.5 L300 273.4 L299 273.4 L299 283.5 L298 283.5 L298 279.8 L297 279.8 L297 275.6 L296 275.6 L296 270.4 L295 270.4 L295 276.5 L294 276.5 L294 274.4 L293 274.4 L293 283.5 L292 283.5 L292 273.5 L291 273.5 L291 267.7 L290 267.7 L290 262.7 L289 262.7 L289 264.5 L288 264.5 L288 262.6 L287 262.6 L287 262.5 L286 262.5 L286 261.6 L285 261.6 L285 261 L284 261 L284 262.5 L283 262.5 L283 261.3 L282 261.3 L282 263.5 L281 263.5 L281 262.2 L280 262.2 L280 264.5 L279 264.5 L279 262.8 L278 262.8 L278 266.5 L277 266.5 L277 265.1 L276 265.1 L276 270.5 L275 270.5 L275 267.8 L274 267.8 L274 277.5 L273 277.5 L273 271.7 L272 271.7 L272 267.4 L271 267.4 L271 269.5 L270 269.5 L270 263.9 L269 263.9 L269 264.5 L268 264.5 L268 260.7 L267 260.7 L267 260.6 L266 260.6 L266 263.5 L265 263.5 L265 262.9 L264 262.9 L264 266.5 L263 266.5 L263 270.5 L262 270.5 L262 267.3 L261 267.3 L261 274.5 L260 274.5 L260 273.2 L259 273.2 L259 283.5 L258 283.5 L258 271.2 L257 271.2 L257 263.7 L256 263.7 L256 261.6 L255 261.6 L255 266.5 L254 266.5 L254 268.6 L253 268.6 L253 272.5 L252 272.5 L252 269.5 L251 269.5 L251 268.5 L250 268.5 L250 265.8 L249 265.8 L249 270.5 L248 270.5 L248 267.7 L247 267.7 L247 273.5 L246 273.5 L246 269.4 L245 269.4 L245 280.5 L244 280.5 L244 283.8 L243 283.8 L243 295.1 L242 295.1 L242 274.5 L241 274.5 L241 268.5 L240 268.5 L240 264.9 L239 264.9 L239 269.5 L238 269.5 L238 272.5 L237 272.5 L237 268.9 L236 268.9 L236 268.5 L235 268.5 L235 265.8 L234 265.8 L234 266.5 L233 266.5 L233 265.3 L232 265.3 L232 270.5 L231 270.5 L231 268.2 L230 268.2 L230 277.5 L229 277.5 L229 266.9 L228 266.9 L228 263.5 L227 263.5 L227 260.3 L226 260.3 L226 259.6 L225 259.6 L225 260.1 L224 260.1 L224 262.5 L223 262.5 L223 261.7 L222 261.7 L222 266.5 L221 266.5 L221 265.7 L220 265.7 L220 265.3 L219 265.3 L219 270.5 L218 270.5 L218 276.5 L217 276.5 L217 270.2 L216 270.2 L216 267.3 L215 267.3 L215 268.5 L214 268.5 L214 265.1 L213 265.1 L213 266.5 L212 266.5 L212 264.4 L211 264.4 L211 268.5 L210 268.5 L210 266.6 L209 266.6 L209 269.5 L208 269.5 L208 267 L207 267 L207 270.5 L206 270.5 L206 272.5 L205 272.5 L205 275.5 L204 275.5 L204 279.5 L203 279.5 L203 281.2 L202 281.2Z" fill="#8a8a8a"/>
<text x="50.3" y="189.3" text-anchor="end" class="db">-2,5</text>
<rect x="54" y="185.5" width="2" height="1" fill="#f0f0f0"/>
<text x="50.3" y="213.8" text-anchor="end" class="db">-6,0</text>
<rect x="54" y="210.0" width="2" height="1" fill="#f0f0f0"/>
<text x="50.3" y="237.8" text-anchor="end" class="db">-12,0</text>
<rect x="54" y="234.0" width="2" height="1" fill="#f0f0f0"/>
<text x="50.3" y="261.8" text-anchor="end" class="db3">-Inf.</text>
<rect x="54" y="258.0" width="2" height="1" fill="#f0f0f0"/>
<text x="50.3" y="285.8" text-anchor="end" class="db">-12,0</text>
<rect x="54" y="282.0" width="2" height="1" fill="#f0f0f0"/>
<text x="50.3" y="309.8" text-anchor="end" class="db">-6,0</text>
<rect x="54" y="306.0" width="2" height="1" fill="#f0f0f0"/>
<text x="50.3" y="334.8" text-anchor="end" class="db">-2,5</text>
<rect x="54" y="331.0" width="2" height="1" fill="#f0f0f0"/>
<!-- track 2 -->

<rect x="57" y="356" width="636" height="1" fill="#222"/>
<rect x="8" y="357" width="49" height="197" fill="#efefef"/>
<rect x="57" y="357" width="636" height="197" fill="#ffffff"/>
<rect x="693" y="357" width="7" height="197" fill="#f2f2f2"/>
<rect x="56" y="357" width="1" height="197" fill="#b0b0b0"/>
<rect x="57" y="407" width="636" height="1" fill="#b8b8b8"/>
<rect x="57" y="503" width="636" height="1" fill="#b8b8b8"/>
<rect x="57" y="455" width="636" height="1" fill="#222"/>
<rect x="9.500" y="358.500" width="19" height="16" rx="2" fill="url(#gDark)" stroke="#444"/>
<text x="22" y="371.500" text-anchor="middle" style="font-size:12px;fill:#fff">2</text>
<rect x="31.500" y="358.500" width="13" height="12" rx="2" fill="url(#gDark)" stroke="#444"/>
<rect x="34" y="362" width="9" height="2" fill="#fff"/>

<path d="M57 455 L58 455 L58 455.1 L59 455.1 L59 455.1 L60 455.1 L60 455.1 L61 455.1 L61 455.2 L62 455.2 L62 455.2 L63 455.2 L63 455.2 L64 455.2 L64 455.2 L65 455.2 L65 455.2 L66 455.2 L66 455.2 L67 455.2 L67 455.2 L68 455.2 L68 455.2 L69 455.2 L69 455.1 L70 455.1 L70 455.1 L71 455.1 L71 455.1 L72 455.1 L72 455.1 L73 455.1 L73 455 L74 455 L74 421.5 L75 421.5 L75 436.5 L76 436.5 L76 438.5 L77 438.5 L77 441.5 L78 441.5 L78 443.5 L79 443.5 L79 445.5 L80 445.5 L80 447.5 L81 447.5 L81 448.5 L82 448.5 L82 449.5 L83 449.5 L83 452 L84 452 L84 450.5 L85 450.5 L85 451 L86 451 L86 447.5 L87 447.5 L87 450.5 L88 450.5 L88 450.6 L89 450.6 L89 445.5 L90 445.5 L90 450.3 L91 450.3 L91 449.5 L92 449.5 L92 452.3 L93 452.3 L93 450.5 L94 450.5 L94 452.4 L95 452.4 L95 451.2 L96 451.2 L96 450.7 L97 450.7 L97 446.5 L98 446.5 L98 450.5 L99 450.5 L99 452.6 L100 452.6 L100 450.5 L101 450.5 L101 447.5 L102 447.5 L102 417 L103 417 L103 425.5 L104 425.5 L104 433.5 L105 433.5 L105 437.5 L106 437.5 L106 440.5 L107 440.5 L107 443.5 L108 443.5 L108 445.5 L109 445.5 L109 447.5 L110 447.5 L110 449.5 L111 449.5 L111 450.5 L112 450.5 L112 451.5 L113 451.5 L113 452.5 L114 452.5 L114 453.5 L115 453.5 L115 454.6 L116 454.6 L116 454.5 L117 454.5 L117 454.9 L118 454.9 L118 454.9 L119 454.9 L119 454.9 L120 454.9 L120 454.7 L121 454.7 L121 454.9 L122 454.9 L122 455 L123 455 L123 455.1 L124 455.1 L124 455.1 L125 455.1 L125 455.1 L126 455.1 L126 455.1 L127 455.1 L127 455.1 L128 455.1 L128 455.1 L129 455.1 L129 455 L130 455 L130 412.9 L131 412.9 L131 427.5 L132 427.5 L132 433.5 L133 433.5 L133 437.5 L134 437.5 L134 441.5 L135 441.5 L135 444.5 L136 444.5 L136 446.5 L137 446.5 L137 448.5 L138 448.5 L138 450.5 L139 450.5 L139 451.5 L140 451.5 L140 453.2 L141 453.2 L141 452.5 L142 452.5 L142 452.6 L143 452.6 L143 451.1 L144 451.1 L144 449.5 L145 449.5 L145 446.5 L146 446.5 L146 442.5 L147 442.5 L147 449.5 L148 449.5 L148 450.5 L149 450.5 L149 452.3 L150 452.3 L150 451.3 L151 451.3 L151 450.8 L152 450.8 L152 446.5 L153 446.5 L153 450.7 L154 450.7 L154 451.5 L155 451.5 L155 451.5 L156 451.5 L156 452.1 L157 452.1 L157 450.5 L158 450.5 L158 406.3 L159 406.3 L159 420.5 L160 420.5 L160 428.5 L161 428.5 L161 431.5 L162 431.5 L162 435.5 L163 435.5 L163 439.5 L164 439.5 L164 442.5 L165 442.5 L165 445.5 L166 445.5 L166 448.5 L167 448.5 L167 451.5 L168 451.5 L168 453.5 L169 453.5 L169 454.1 L170 454.1 L170 453 L171 453 L171 451.5 L172 451.5 L172 450.5 L173 450.5 L173 446.5 L174 446.5 L174 435.5 L175 435.5 L175 441.5 L176 441.5 L176 447.4 L177 447.4 L177 443.5 L178 443.5 L178 446.5 L179 446.5 L179 449.3 L180 449.3 L180 445.5 L181 445.5 L181 448.5 L182 448.5 L182 450.4 L183 450.4 L183 447.5 L184 447.5 L184 446.5 L185 446.5 L185 443.5 L186 443.5 L186 441.5 L187 441.5 L187 411.2 L188 411.2 L188 425.5 L189 425.5 L189 430.5 L190 430.5 L190 435.5 L191 435.5 L191 439.5 L192 439.5 L192 442.5 L193 442.5 L193 444.5 L194 444.5 L194 445.5 L195 445.5 L195 446.5 L196 446.5 L196 447.6 L197 447.6 L197 442.5 L198 442.5 L198 446.5 L199 446.5 L199 447 L200 447 L200 445 L201 445 L201 437.7 L202 437.7 L202 428.5 L203 428.5 L203 430.5 L204 430.5 L204 434.5 L205 434.5 L205 438.5 L206 438.5 L206 440.5 L207 440.5 L207 447.6 L208 447.6 L208 444.5 L209 444.5 L209 447.5 L210 447.5 L210 445.5 L211 445.5 L211 449.1 L212 449.1 L212 446.5 L213 446.5 L213 447.1 L214 447.1 L214 441.5 L215 441.5 L215 443.3 L216 443.3 L216 435.1 L217 435.1 L217 430.5 L218 430.5 L218 439.5 L219 439.5 L219 446.2 L220 446.2 L220 448.1 L221 448.1 L221 445.5 L222 445.5 L222 451.6 L223 451.6 L223 450.5 L224 450.5 L224 453.6 L225 453.6 L225 454.3 L226 454.3 L226 453.7 L227 453.7 L227 450.5 L228 450.5 L228 447.7 L229 447.7 L229 437.5 L230 437.5 L230 444.8 L231 444.8 L231 442.5 L232 442.5 L232 447.6 L233 447.6 L233 445.5 L234 445.5 L234 448.1 L235 448.1 L235 443.5 L236 443.5 L236 443.7 L237 443.7 L237 438.5 L238 438.5 L238 443.5 L239 443.5 L239 449 L240 449 L240 445.5 L241 445.5 L241 437.5 L242 437.5 L242 419.1 L243 419.1 L243 426 L244 426 L244 429.5 L245 429.5 L245 440 L246 440 L246 435.5 L247 435.5 L247 445 L248 445 L248 441.5 L249 441.5 L249 445.8 L250 445.8 L250 443.5 L251 443.5 L251 442.5 L252 442.5 L252 438.5 L253 438.5 L253 444.3 L254 444.3 L254 445.5 L255 445.5 L255 450.5 L256 450.5 L256 449.9 L257 449.9 L257 443 L258 443 L258 431.5 L259 431.5 L259 441 L260 441 L260 434.5 L261 434.5 L261 440.9 L262 440.9 L262 435.5 L263 435.5 L263 443.5 L264 443.5 L264 450.1 L265 450.1 L265 448.5 L266 448.5 L266 452.4 L267 452.4 L267 452.7 L268 452.7 L268 448.5 L269 448.5 L269 449.2 L270 449.2 L270 442.5 L271 442.5 L271 446.1 L272 446.1 L272 442.4 L273 442.4 L273 435.5 L274 435.5 L274 444.6 L275 444.6 L275 441.5 L276 441.5 L276 447.1 L277 447.1 L277 445.5 L278 445.5 L278 449.7 L279 449.7 L279 447.5 L280 447.5 L280 450.8 L281 450.8 L281 449.5 L282 449.5 L282 451.8 L283 451.8 L283 450.5 L284 450.5 L284 452.9 L285 452.9 L285 452.5 L286 452.5 L286 451.5 L287 451.5 L287 451.1 L288 451.1 L288 448.5 L289 448.5 L289 449.1 L290 449.1 L290 442.8 L291 442.8 L291 439.5 L292 439.5 L292 435.5 L293 435.5 L293 442.4 L294 442.4 L294 438.5 L295 438.5 L295 443.8 L296 443.8 L296 438.4 L297 438.4 L297 433.3 L298 433.3 L298 426.8 L299 426.8 L299 438.4 L300 438.4 L300 431.5 L301 431.5 L301 426.5 L302 426.5 L302 438.2 L303 438.2 L303 434.5 L304 434.5 L304 441.1 L305 441.1 L305 438.5 L306 438.5 L306 442.5 L307 442.5 L307 447.6 L308 447.6 L308 445.5 L309 445.5 L309 448.5 L310 448.5 L310 451.7 L311 451.7 L311 450.1 L312 450.1 L312 443.5 L313 443.5 L313 442.9 L314 442.9 L314 430.7 L315 430.7 L315 434.5 L316 434.5 L316 442.7 L317 442.7 L317 435.5 L318 435.5 L318 435.5 L319 435.5 L319 441.5 L320 441.5 L320 431.5 L321 431.5 L321 442.4 L322 442.4 L322 437.5 L323 437.5 L323 442.9 L324 442.9 L324 440.5 L325 440.5 L325 433.5 L326 433.5 L326 433.8 L327 433.8 L327 422.5 L328 422.5 L328 432.5 L329 432.5 L329 442.7 L330 442.7 L330 437.5 L331 437.5 L331 442.6 L332 442.6 L332 435.5 L333 435.5 L333 437.8 L334 437.8 L334 431.5 L335 431.5 L335 443.2 L336 443.2 L336 440.5 L337 440.5 L337 447.7 L338 447.7 L338 445.5 L339 445.5 L339 450.6 L340 450.6 L340 448.5 L341 448.5 L341 452 L342 452 L342 450.5 L343 450.5 L343 451.7 L344 451.7 L344 449.5 L345 449.5 L345 450.1 L346 450.1 L346 444.5 L347 444.5 L347 441.5 L348 441.5 L348 433.5 L349 433.5 L349 438.5 L350 438.5 L350 445.2 L351 445.2 L351 440.5 L352 440.5 L352 430.5 L353 430.5 L353 416.8 L354 416.8 L354 427.5 L355 427.5 L355 435.4 L356 435.4 L356 430.5 L357 430.5 L357 434.5 L358 434.5 L358 441.7 L359 441.7 L359 433.5 L360 433.5 L360 435.5 L361 435.5 L361 438.5 L362 438.5 L362 440.5 L363 440.5 L363 444.5 L364 444.5 L364 449.8 L365 449.8 L365 447.5 L366 447.5 L366 447.5 L367 447.5 L367 442.5 L368 442.5 L368 433.7 L369 433.7 L369 442.9 L370 442.9 L370 436.5 L371 436.5 L371 437.5 L372 437.5 L372 440.5 L373 440.5 L373 442.5 L374 442.5 L374 446.3 L375 446.3 L375 440 L376 440 L376 444.5 L377 444.5 L377 450.2 L378 450.2 L378 447.5 L379 447.5 L379 445.5 L380 445.5 L380 444.1 L381 444.1 L381 429.3 L382 429.3 L382 423.1 L383 423.1 L383 433.5 L384 433.5 L384 443.6 L385 443.6 L385 441.5 L386 441.5 L386 443.5 L387 443.5 L387 445.1 L388 445.1 L388 435.5 L389 435.5 L389 443 L390 443 L390 448.6 L391 448.6 L391 449.5 L392 449.5 L392 450.1 L393 450.1 L393 447.5 L394 447.5 L394 441.5 L395 441.5 L395 434.5 L396 434.5 L396 438.6 L397 438.6 L397 440.5 L398 440.5 L398 445.2 L399 445.2 L399 443.5 L400 443.5 L400 445.5 L401 445.5 L401 441.5 L402 441.5 L402 435.5 L403 435.5 L403 443.1 L404 443.1 L404 446.5 L405 446.5 L405 450.4 L406 450.4 L406 449.8 L407 449.8 L407 445.2 L408 445.2 L408 435.5 L409 435.5 L409 444 L410 444 L410 442.5 L411 442.5 L411 446.9 L412 446.9 L412 445.5 L413 445.5 L413 450 L414 450 L414 447.5 L415 447.5 L415 446.5 L416 446.5 L416 447.7 L417 447.7 L417 441.5 L418 441.5 L418 448.5 L419 448.5 L419 452.5 L420 452.5 L420 451 L421 451 L421 450.2 L422 450.2 L422 445 L423 445 L423 434.5 L424 434.5 L424 442.3 L425 442.3 L425 440.5 L426 440.5 L426 445.7 L427 445.7 L427 443.5 L428 443.5 L428 448.3 L429 448.3 L429 445.5 L430 445.5 L430 449.9 L431 449.9 L431 447.5 L432 447.5 L432 442.5 L433 442.5 L433 445.1 L434 445.1 L434 435.5 L435 435.5 L435 443.7 L436 443.7 L436 437.5 L437 437.5 L437 430.8 L438 430.8 L438 439.5 L439 439.5 L439 446.6 L440 446.6 L440 443.5 L441 443.5 L441 449.4 L442 449.4 L442 446.5 L443 446.5 L443 450.5 L444 450.5 L444 450.9 L445 450.9 L445 449.5 L446 449.5 L446 451.5 L447 451.5 L447 453.2 L448 453.2 L448 453 L449 453 L449 447.5 L450 447.5 L450 445.9 L451 445.9 L451 438.5 L452 438.5 L452 436.5 L453 436.5 L453 441.5 L454 441.5 L454 447 L455 447 L455 443.5 L456 443.5 L456 444.5 L457 444.5 L457 445.9 L458 445.9 L458 441.5 L459 441.5 L459 447.5 L460 447.5 L460 451.3 L461 451.3 L461 448 L462 448 L462 443.5 L463 443.5 L463 441.5 L464 441.5 L464 440.5 L465 440.5 L465 442.6 L466 442.6 L466 435.5 L467 435.5 L467 443.5 L468 443.5 L468 449 L469 449 L469 447.5 L470 447.5 L470 449.2 L471 449.2 L471 446.5 L472 446.5 L472 440.5 L473 440.5 L473 446.9 L474 446.9 L474 447.5 L475 447.5 L475 451.8 L476 451.8 L476 451.4 L477 451.4 L477 451.1 L478 451.1 L478 447.5 L479 447.5 L479 440.5 L480 440.5 L480 435.5 L481 435.5 L481 442 L482 442 L482 440.5 L483 440.5 L483 446.7 L484 446.7 L484 443.5 L485 443.5 L485 448.9 L486 448.9 L486 445.5 L487 445.5 L487 446 L488 446 L488 442.5 L489 442.5 L489 448.5 L490 448.5 L490 452.6 L491 452.6 L491 451.1 L492 451.1 L492 443.5 L493 443.5 L493 445.5 L494 445.5 L494 434.5 L495 434.5 L495 444.7 L496 444.7 L496 441.5 L497 441.5 L497 448.6 L498 448.6 L498 445.5 L499 445.5 L499 449.8 L500 449.8 L500 447.5 L501 447.5 L501 450.5 L502 450.5 L502 447.5 L503 447.5 L503 451.4 L504 451.4 L504 450.5 L505 450.5 L505 453.4 L506 453.4 L506 453.6 L507 453.6 L507 451.5 L508 451.5 L508 435.5 L509 435.5 L509 416.5 L510 416.5 L510 421.7 L511 421.7 L511 425.4 L512 425.4 L512 427.5 L513 427.5 L513 430.5 L514 430.5 L514 439.1 L515 439.1 L515 433.5 L516 433.5 L516 437.5 L517 437.5 L517 443.9 L518 443.9 L518 440.5 L519 440.5 L519 435.5 L520 435.5 L520 437.4 L521 437.4 L521 425.5 L522 425.5 L522 409.5 L523 409.5 L523 419.5 L524 419.5 L524 430.5 L525 430.5 L525 417.5 L526 417.5 L526 418.5 L527 418.5 L527 429.5 L528 429.5 L528 435.5 L529 435.5 L529 442.5 L530 442.5 L530 448.6 L531 448.6 L531 447.5 L532 447.5 L532 441.5 L533 441.5 L533 443.7 L534 443.7 L534 435.5 L535 435.5 L535 429.5 L536 429.5 L536 422 L537 422 L537 435.6 L538 435.6 L538 426.5 L539 426.5 L539 425.5 L540 425.5 L540 435.2 L541 435.2 L541 431.5 L542 431.5 L542 440.4 L543 440.4 L543 433.5 L544 433.5 L544 425.5 L545 425.5 L545 437.7 L546 437.7 L546 431.5 L547 431.5 L547 439.1 L548 439.1 L548 435.5 L549 435.5 L549 429.5 L550 429.5 L550 418.7 L551 418.7 L551 433.2 L552 433.2 L552 421 L553 421 L553 419.5 L554 419.5 L554 424.5 L555 424.5 L555 433.9 L556 433.9 L556 427.5 L557 427.5 L557 433.5 L558 433.5 L558 440.5 L559 440.5 L559 437.5 L560 437.5 L560 443.5 L561 443.5 L561 447.5 L562 447.5 L562 448.6 L563 448.6 L563 443.5 L564 443.5 L564 446.9 L565 446.9 L565 438.5 L566 438.5 L566 445.1 L567 445.1 L567 443.5 L568 443.5 L568 445.5 L569 445.5 L569 445.7 L570 445.7 L570 439.5 L571 439.5 L571 433.5 L572 433.5 L572 441.5 L573 441.5 L573 434.5 L574 434.5 L574 430.5 L575 430.5 L575 438.9 L576 438.9 L576 435.5 L577 435.5 L577 431.5 L578 431.5 L578 435.1 L579 435.1 L579 427.5 L580 427.5 L580 433.5 L581 433.5 L581 440.7 L582 440.7 L582 437.5 L583 437.5 L583 441.5 L584 441.5 L584 447 L585 447 L585 443.5 L586 443.5 L586 442.3 L587 442.3 L587 437.5 L588 437.5 L588 429.5 L589 429.5 L589 437.5 L590 437.5 L590 445.8 L591 445.8 L591 440.5 L592 440.5 L592 435.5 L593 435.5 L593 439.1 L594 439.1 L594 427.5 L595 427.5 L595 434.5 L596 434.5 L596 443.3 L597 443.3 L597 437.5 L598 437.5 L598 440.4 L599 440.4 L599 435.5 L600 435.5 L600 439.3 L601 439.3 L601 430.5 L602 430.5 L602 434.5 L603 434.5 L603 439.5 L604 439.5 L604 435.5 L605 435.5 L605 423.5 L606 423.5 L606 433.8 L607 433.8 L607 428.5 L608 428.5 L608 423.5 L609 423.5 L609 429.5 L610 429.5 L610 440.4 L611 440.4 L611 433.5 L612 433.5 L612 439.5 L613 439.5 L613 447.5 L614 447.5 L614 443.5 L615 443.5 L615 451.2 L616 451.2 L616 450.5 L617 450.5 L617 453.5 L618 453.5 L618 452.7 L619 452.7 L619 447.5 L620 447.5 L620 445.3 L621 445.3 L621 437.5 L622 437.5 L622 425.5 L623 425.5 L623 432.5 L624 432.5 L624 441.5 L625 441.5 L625 435.5 L626 435.5 L626 431.6 L627 431.6 L627 427.5 L628 427.5 L628 434.5 L629 434.5 L629 442 L630 442 L630 437.5 L631 437.5 L631 437.5 L632 437.5 L632 440.1 L633 440.1 L633 435.5 L634 435.5 L634 438.1 L635 438.1 L635 430.5 L636 430.5 L636 423.5 L637 423.5 L637 428.5 L638 428.5 L638 438.2 L639 438.2 L639 430.5 L640 430.5 L640 434.5 L641 434.5 L641 441 L642 441 L642 435.5 L643 435.5 L643 441.5 L644 441.5 L644 445.5 L645 445.5 L645 440.5 L646 440.5 L646 442.9 L647 442.9 L647 433.5 L648 433.5 L648 434.5 L649 434.5 L649 440.4 L650 440.4 L650 433.5 L651 433.5 L651 437.3 L652 437.3 L652 429.5 L653 429.5 L653 436.1 L654 436.1 L654 419.5 L655 419.5 L655 434 L656 434 L656 433.5 L657 433.5 L657 440.5 L658 440.5 L658 443.9 L659 443.9 L659 434.5 L660 434.5 L660 404.5 L661 404.5 L661 429.5 L662 429.5 L662 434.7 L663 434.7 L663 425.5 L664 425.5 L664 434.4 L665 434.4 L665 430.5 L666 430.5 L666 433.5 L667 433.5 L667 438.5 L668 438.5 L668 446.4 L669 446.4 L669 443.5 L670 443.5 L670 448.5 L671 448.5 L671 452.9 L672 452.9 L672 452 L673 452 L673 450.7 L674 450.7 L674 446.5 L675 446.5 L675 440.5 L676 440.5 L676 444.3 L677 444.3 L677 439.5 L678 439.5 L678 438.5 L679 438.5 L679 442.5 L680 442.5 L680 447.1 L681 447.1 L681 443.5 L682 443.5 L682 437.5 L683 437.5 L683 419.5 L684 419.5 L684 435.7 L685 435.7 L685 445.4 L686 445.4 L686 443.5 L687 443.5 L687 442.5 L688 442.5 L688 445.1 L689 445.1 L689 437 L690 437 L690 423.5 L691 423.5 L691 427 L692 427 L692 425.5 L693 425.5 L693 480.5 L692 480.5 L692 479.6 L691 479.6 L691 480.5 L690 480.5 L690 474.5 L689 474.5 L689 468.6 L688 468.6 L688 471.5 L687 471.5 L687 470.5 L686 470.5 L686 466 L685 466 L685 471.9 L684 471.9 L684 475.5 L683 475.5 L683 471.5 L682 471.5 L682 470.5 L681 470.5 L681 466.7 L680 466.7 L680 470.5 L679 470.5 L679 473.5 L678 473.5 L678 472.5 L677 472.5 L677 465.5 L676 465.5 L676 470.5 L675 470.5 L675 464.5 L674 464.5 L674 460.5 L673 460.5 L673 458.3 L672 458.3 L672 457.7 L671 457.7 L671 461.5 L670 461.5 L670 467.5 L669 467.5 L669 464 L668 464 L668 470.5 L667 470.5 L667 473.5 L666 473.5 L666 475.5 L665 475.5 L665 470 L664 470 L664 480.5 L663 480.5 L663 471.8 L662 471.8 L662 479.5 L661 479.5 L661 493.1 L660 493.1 L660 475.5 L659 475.5 L659 468.4 L658 468.4 L658 475.5 L657 475.5 L657 477.5 L656 477.5 L656 475 L655 475 L655 484.5 L654 484.5 L654 473.7 L653 473.7 L653 477.5 L652 477.5 L652 470.2 L651 470.2 L651 473.5 L650 473.5 L650 467.6 L649 467.6 L649 475.5 L648 475.5 L648 481.5 L647 481.5 L647 474 L646 474 L646 472.5 L645 472.5 L645 464 L644 464 L644 467.5 L643 467.5 L643 475.5 L642 475.5 L642 471.1 L641 471.1 L641 475.5 L640 475.5 L640 475.5 L639 475.5 L639 470.7 L638 470.7 L638 475.5 L637 475.5 L637 477.5 L636 477.5 L636 476.5 L635 476.5 L635 470.7 L634 470.7 L634 477.5 L633 477.5 L633 469.6 L632 469.6 L632 474.5 L631 474.5 L631 473.5 L630 473.5 L630 468 L629 468 L629 474.5 L628 474.5 L628 477.5 L627 477.5 L627 475.9 L626 475.9 L626 475.5 L625 475.5 L625 468.8 L624 468.8 L624 477.5 L623 477.5 L623 482.5 L622 482.5 L622 473.5 L621 473.5 L621 466.1 L620 466.1 L620 465.5 L619 465.5 L619 458.8 L618 458.8 L618 457.5 L617 457.5 L617 460.5 L616 460.5 L616 459.9 L615 459.9 L615 465.5 L614 465.5 L614 463.3 L613 463.3 L613 469.5 L612 469.5 L612 475.5 L611 475.5 L611 471 L610 471 L610 479.5 L609 479.5 L609 485.5 L608 485.5 L608 479.5 L607 479.5 L607 472 L606 472 L606 477.5 L605 477.5 L605 470.5 L604 470.5 L604 466.9 L603 466.9 L603 471.5 L602 471.5 L602 475.5 L601 475.5 L601 470.9 L600 470.9 L600 471.5 L599 471.5 L599 465.7 L598 465.7 L598 467.5 L597 467.5 L597 464.6 L596 464.6 L596 472.5 L595 472.5 L595 481.5 L594 481.5 L594 470.8 L593 470.8 L593 473.5 L592 473.5 L592 467.5 L591 467.5 L591 463.8 L590 463.8 L590 471.5 L589 471.5 L589 481.5 L588 481.5 L588 473.5 L587 473.5 L587 466.6 L586 466.6 L586 465.5 L585 465.5 L585 462.3 L584 462.3 L584 468.5 L583 468.5 L583 475.5 L582 475.5 L582 470 L581 470 L581 479.5 L580 479.5 L580 487.5 L579 487.5 L579 479.7 L578 479.7 L578 479.5 L577 479.5 L577 473.1 L576 473.1 L576 471.1 L575 471.1 L575 475.5 L574 475.5 L574 472.5 L573 472.5 L573 468.9 L572 468.9 L572 473.5 L571 473.5 L571 468.5 L570 468.5 L570 463.4 L569 463.4 L569 463.5 L568 463.5 L568 465.5 L567 465.5 L567 463.4 L566 463.4 L566 472.5 L565 472.5 L565 464.8 L564 464.8 L564 467.5 L563 467.5 L563 460.6 L562 460.6 L562 461.5 L561 461.5 L561 464.5 L560 464.5 L560 470.5 L559 470.5 L559 468.6 L558 468.6 L558 475.5 L557 475.5 L557 483.5 L556 483.5 L556 475.1 L555 475.1 L555 488.5 L554 488.5 L554 495.3 L553 495.3 L553 492.4 L552 492.4 L552 479.9 L551 479.9 L551 490.5 L550 490.5 L550 479.5 L549 479.5 L549 470.5 L548 470.5 L548 467.5 L547 467.5 L547 473.5 L546 473.5 L546 470.4 L545 470.4 L545 477.5 L544 477.5 L544 474.5 L543 474.5 L543 469.6 L542 469.6 L542 477.5 L541 477.5 L541 475 L540 475 L540 485.5 L539 485.5 L539 481.5 L538 481.5 L538 474.6 L537 474.6 L537 480.5 L536 480.5 L536 477.5 L535 477.5 L535 475.5 L534 475.5 L534 467.7 L533 467.7 L533 468.5 L532 468.5 L532 463.5 L531 463.5 L531 461.5 L530 461.5 L530 468.5 L529 468.5 L529 475.5 L528 475.5 L528 479.5 L527 479.5 L527 485.5 L526 485.5 L526 485.5 L525 485.5 L525 475.8 L524 475.8 L524 487.5 L523 487.5 L523 497 L522 497 L522 483.5 L521 483.5 L521 472.7 L520 472.7 L520 473.5 L519 473.5 L519 467.5 L518 467.5 L518 465.6 L517 465.6 L517 471.5 L516 471.5 L516 477.5 L515 477.5 L515 473.9 L514 473.9 L514 480.5 L513 480.5 L513 485.5 L512 485.5 L512 484 L511 484 L511 493 L510 493 L510 500.5 L509 500.5 L509 477.5 L508 477.5 L508 459.5 L507 459.5 L507 457.4 L506 457.4 L506 457.6 L505 457.6 L505 460.5 L504 460.5 L504 459.7 L503 459.7 L503 467.5 L502 467.5 L502 462.6 L501 462.6 L501 463.5 L500 463.5 L500 460.7 L499 460.7 L499 463.5 L498 463.5 L498 461.4 L497 461.4 L497 466.5 L496 466.5 L496 464.7 L495 464.7 L495 472.5 L494 472.5 L494 463.9 L493 463.9 L493 465.5 L492 465.5 L492 459.5 L491 459.5 L491 458.4 L490 458.4 L490 462.5 L489 462.5 L489 470.5 L488 470.5 L488 465.3 L487 465.3 L487 465.5 L486 465.5 L486 462.2 L485 462.2 L485 465.5 L484 465.5 L484 463.5 L483 463.5 L483 468.5 L482 468.5 L482 468.4 L481 468.4 L481 476.5 L480 476.5 L480 469.5 L479 469.5 L479 463.5 L478 463.5 L478 460.8 L477 460.8 L477 459.6 L476 459.6 L476 458.3 L475 458.3 L475 461.5 L474 461.5 L474 460.6 L473 460.6 L473 465.5 L472 465.5 L472 462.5 L471 462.5 L471 460.4 L470 460.4 L470 461.5 L469 461.5 L469 460 L468 460 L468 464.5 L467 464.5 L467 472.5 L466 472.5 L466 466.2 L465 466.2 L465 467.5 L464 467.5 L464 465.5 L463 465.5 L463 464.5 L462 464.5 L462 462 L461 462 L461 458.6 L460 458.6 L460 461.5 L459 461.5 L459 463.5 L458 463.5 L458 461.2 L457 461.2 L457 463.5 L456 463.5 L456 465.5 L455 465.5 L455 462.4 L454 462.4 L454 466.5 L453 466.5 L453 470.5 L452 470.5 L452 469 L451 469 L451 461.4 L450 461.4 L450 461.5 L449 461.5 L449 458 L448 458 L448 457.7 L447 457.7 L447 458.5 L446 458.5 L446 460.5 L445 460.5 L445 459.2 L444 459.2 L444 459.6 L443 459.6 L443 462.5 L442 462.5 L442 460 L441 460 L441 463.5 L440 463.5 L440 462.2 L439 462.2 L439 468 L438 468 L438 484.8 L437 484.8 L437 473.5 L436 473.5 L436 467.4 L435 467.4 L435 470.5 L434 470.5 L434 464.1 L433 464.1 L433 465.5 L432 465.5 L432 461.5 L431 461.5 L431 459.8 L430 459.8 L430 463.5 L429 463.5 L429 461.2 L428 461.2 L428 465.5 L427 465.5 L427 462.3 L426 462.3 L426 468.5 L425 468.5 L425 466 L424 466 L424 476.5 L423 476.5 L423 466 L422 466 L422 461.1 L421 461.1 L421 459.4 L420 459.4 L420 458.1 L419 458.1 L419 460.5 L418 460.5 L418 465.5 L417 465.5 L417 461.4 L416 461.4 L416 462.5 L415 462.5 L415 462.5 L414 462.5 L414 461.3 L413 461.3 L413 465.5 L412 465.5 L412 462.6 L411 462.6 L411 467.5 L410 467.5 L410 465.7 L409 465.7 L409 473.5 L408 473.5 L408 465.5 L407 465.5 L407 460.8 L406 460.8 L406 460 L405 460 L405 461.5 L404 461.5 L404 464.1 L403 464.1 L403 469.5 L402 469.5 L402 465.5 L401 465.5 L401 463.5 L400 463.5 L400 465.5 L399 465.5 L399 463.2 L398 463.2 L398 467.5 L397 467.5 L397 469.5 L396 469.5 L396 479.5 L395 479.5 L395 469.5 L394 469.5 L394 463.5 L393 463.5 L393 460.8 L392 460.8 L392 460.5 L391 460.5 L391 460.6 L390 460.6 L390 466.5 L389 466.5 L389 475.5 L388 475.5 L388 465.4 L387 465.4 L387 465.5 L386 465.5 L386 465.5 L385 465.5 L385 464.5 L384 464.5 L384 473.5 L383 473.5 L383 486.5 L382 486.5 L382 480 L381 480 L381 467.3 L380 467.3 L380 465.5 L379 465.5 L379 463.5 L378 463.5 L378 461.6 L377 461.6 L377 465.5 L376 465.5 L376 470.1 L375 470.1 L375 464.5 L374 464.5 L374 468.5 L373 468.5 L373 469.5 L372 469.5 L372 470.5 L371 470.5 L371 473.5 L370 473.5 L370 469.2 L369 469.2 L369 480.5 L368 480.5 L368 469.5 L367 469.5 L367 462.8 L366 462.8 L366 461.5 L365 461.5 L365 459.7 L364 459.7 L364 463.5 L363 463.5 L363 465.5 L362 465.5 L362 466.5 L361 466.5 L361 467 L360 467 L360 467.5 L359 467.5 L359 464.6 L358 464.6 L358 468.5 L357 468.5 L357 470.5 L356 470.5 L356 466.6 L355 466.6 L355 475.5 L354 475.5 L354 488.5 L353 488.5 L353 476.2 L352 476.2 L352 467.5 L351 467.5 L351 463.2 L350 463.2 L350 469.5 L349 469.5 L349 473.5 L348 473.5 L348 467.5 L347 467.5 L347 465.5 L346 465.5 L346 461.3 L345 461.3 L345 461.5 L344 461.5 L344 459.7 L343 459.7 L343 459.5 L342 459.5 L342 458.1 L341 458.1 L341 459.5 L340 459.5 L340 458.6 L339 458.6 L339 460.5 L338 460.5 L338 459.7 L337 459.7 L337 465.5 L336 465.5 L336 464.4 L335 464.4 L335 475.5 L334 475.5 L334 469 L333 469 L333 471.5 L332 471.5 L332 467.9 L331 467.9 L331 470.5 L330 470.5 L330 466.2 L329 466.2 L329 473.5 L328 473.5 L328 479.5 L327 479.5 L327 469.1 L326 469.1 L326 471.5 L325 471.5 L325 467.5 L324 467.5 L324 464.9 L323 464.9 L323 471.5 L322 471.5 L322 469.1 L321 469.1 L321 480.5 L320 480.5 L320 471.7 L319 471.7 L319 473.5 L318 473.5 L318 470.5 L317 470.5 L317 466.6 L316 466.6 L316 473.5 L315 473.5 L315 480 L314 480 L314 466.9 L313 466.9 L313 467.5 L312 467.5 L312 460.9 L311 460.9 L311 459.6 L310 459.6 L310 463.5 L309 463.5 L309 470.5 L308 470.5 L308 465.4 L307 465.4 L307 470.5 L306 470.5 L306 470.5 L305 470.5 L305 467.3 L304 467.3 L304 472.5 L303 472.5 L303 467.9 L302 467.9 L302 475.5 L301 475.5 L301 475.5 L300 475.5 L300 470.4 L299 470.4 L299 480.5 L298 480.5 L298 476.8 L297 476.8 L297 472.6 L296 472.6 L296 467.4 L295 467.4 L295 473.5 L294 473.5 L294 471.4 L293 471.4 L293 480.5 L292 480.5 L292 470.5 L291 470.5 L291 464.7 L290 464.7 L290 459.7 L289 459.7 L289 461.5 L288 461.5 L288 459.6 L287 459.6 L287 459.5 L286 459.5 L286 458.6 L285 458.6 L285 458 L284 458 L284 459.5 L283 459.5 L283 458.3 L282 458.3 L282 460.5 L281 460.5 L281 459.2 L280 459.2 L280 461.5 L279 461.5 L279 459.8 L278 459.8 L278 463.5 L277 463.5 L277 462.1 L276 462.1 L276 467.5 L275 467.5 L275 464.8 L274 464.8 L274 474.5 L273 474.5 L273 468.7 L272 468.7 L272 464.4 L271 464.4 L271 466.5 L270 466.5 L270 460.9 L269 460.9 L269 461.5 L268 461.5 L268 457.7 L267 457.7 L267 457.6 L266 457.6 L266 460.5 L265 460.5 L265 459.9 L264 459.9 L264 463.5 L263 463.5 L263 467.5 L262 467.5 L262 464.3 L261 464.3 L261 471.5 L260 471.5 L260 470.2 L259 470.2 L259 480.5 L258 480.5 L258 468.2 L257 468.2 L257 460.7 L256 460.7 L256 458.6 L255 458.6 L255 463.5 L254 463.5 L254 465.6 L253 465.6 L253 469.5 L252 469.5 L252 466.5 L251 466.5 L251 465.5 L250 465.5 L250 462.8 L249 462.8 L249 467.5 L248 467.5 L248 464.7 L247 464.7 L247 470.5 L246 470.5 L246 466.4 L245 466.4 L245 477.5 L244 477.5 L244 480.8 L243 480.8 L243 492.1 L242 492.1 L242 471.5 L241 471.5 L241 465.5 L240 465.5 L240 461.9 L239 461.9 L239 466.5 L238 466.5 L238 469.5 L237 469.5 L237 465.9 L236 465.9 L236 465.5 L235 465.5 L235 462.8 L234 462.8 L234 463.5 L233 463.5 L233 462.3 L232 462.3 L232 467.5 L231 467.5 L231 465.2 L230 465.2 L230 474.5 L229 474.5 L229 463.9 L228 463.9 L228 460.5 L227 460.5 L227 457.3 L226 457.3 L226 456.6 L225 456.6 L225 457.1 L224 457.1 L224 459.5 L223 459.5 L223 458.7 L222 458.7 L222 463.5 L221 463.5 L221 462.7 L220 462.7 L220 462.3 L219 462.3 L219 467.5 L218 467.5 L218 473.5 L217 473.5 L217 467.2 L216 467.2 L216 464.3 L215 464.3 L215 465.5 L214 465.5 L214 462.1 L213 462.1 L213 463.5 L212 463.5 L212 461.4 L211 461.4 L211 465.5 L210 465.5 L210 463.6 L209 463.6 L209 466.5 L208 466.5 L208 464 L207 464 L207 467.5 L206 467.5 L206 469.5 L205 469.5 L205 472.5 L204 472.5 L204 476.5 L203 476.5 L203 478.2 L202 478.2 L202 470.5 L201 470.5 L201 464.5 L200 464.5 L200 463.5 L199 463.5 L199 463.5 L198 463.5 L198 465.5 L197 465.5 L197 462 L196 462 L196 463.5 L195 463.5 L195 463.5 L194 463.5 L194 464.5 L193 464.5 L193 466.5 L192 466.5 L192 470.5 L191 470.5 L191 473.5 L190 473.5 L190 477.5 L189 477.5 L189 483.5 L188 483.5 L188 500 L187 500 L187 465.5 L186 465.5 L186 463.5 L185 463.5 L185 462 L184 462 L184 460.5 L183 460.5 L183 458.8 L182 458.8 L182 460.5 L181 460.5 L181 460.5 L180 460.5 L180 458.9 L179 458.9 L179 461.5 L178 461.5 L178 463.5 L177 463.5 L177 461.1 L176 461.1 L176 464.5 L175 464.5 L175 465.5 L174 465.5 L174 464.5 L173 464.5 L173 463.5 L172 463.5 L172 462 L171 462 L171 459 L170 459 L170 456.9 L169 456.9 L169 457.5 L168 457.5 L168 458.5 L167 458.5 L167 460.5 L166 460.5 L166 463.5 L165 463.5 L165 467.5 L164 467.5 L164 471.5 L163 471.5 L163 477.5 L162 477.5 L162 481.5 L161 481.5 L161 485.5 L160 485.5 L160 491.5 L159 491.5 L159 495.9 L158 495.9 L158 460.5 L157 460.5 L157 459 L156 459 L156 459.5 L155 459.5 L155 459.5 L154 459.5 L154 459.3 L153 459.3 L153 461.5 L152 461.5 L152 458.5 L151 458.5 L151 459.5 L150 459.5 L150 458.2 L149 458.2 L149 459.5 L148 459.5 L148 460.5 L147 460.5 L147 465.5 L146 465.5 L146 462.5 L145 462.5 L145 459.5 L144 459.5 L144 458.5 L143 458.5 L143 457.7 L142 457.7 L142 458.5 L141 458.5 L141 457.6 L140 457.6 L140 458.5 L139 458.5 L139 459.5 L138 459.5 L138 460.5 L137 460.5 L137 462.5 L136 462.5 L136 464.5 L135 464.5 L135 467.5 L134 467.5 L134 471.5 L133 471.5 L133 475.5 L132 475.5 L132 481.5 L131 481.5 L131 495.9 L130 495.9 L130 456 L129 456 L129 455.9 L128 455.9 L128 455.9 L127 455.9 L127 455.9 L126 455.9 L126 455.9 L125 455.9 L125 455.9 L124 455.9 L124 455.9 L123 455.9 L123 456 L122 456 L122 456.1 L121 456.1 L121 456.3 L120 456.3 L120 456.1 L119 456.1 L119 456.1 L118 456.1 L118 456.1 L117 456.1 L117 456.5 L116 456.5 L116 456.4 L115 456.4 L115 457.5 L114 457.5 L114 458 L113 458 L113 458.5 L112 458.5 L112 459.5 L111 459.5 L111 461.5 L110 461.5 L110 463.5 L109 463.5 L109 465.5 L108 465.5 L108 467.5 L107 467.5 L107 471.5 L106 471.5 L106 475.5 L105 475.5 L105 479.5 L104 479.5 L104 483.5 L103 483.5 L103 486 L102 486 L102 461.5 L101 461.5 L101 459.5 L100 459.5 L100 457.9 L99 457.9 L99 459.5 L98 459.5 L98 462.5 L97 462.5 L97 459.8 L96 459.8 L96 459.5 L95 459.5 L95 458.2 L94 458.2 L94 460.5 L93 460.5 L93 459.3 L92 459.3 L92 461.5 L91 461.5 L91 460.9 L90 460.9 L90 465.5 L89 465.5 L89 460.3 L88 460.3 L88 460.5 L87 460.5 L87 463.5 L86 463.5 L86 460.9 L85 460.9 L85 461.5 L84 461.5 L84 459.9 L83 459.9 L83 461.5 L82 461.5 L82 461.5 L81 461.5 L81 462.5 L80 462.5 L80 464.5 L79 464.5 L79 465.5 L78 465.5 L78 467.5 L77 467.5 L77 469.5 L76 469.5 L76 472.5 L75 472.5 L75 494.5 L74 494.5 L74 456 L73 456 L73 455.9 L72 455.9 L72 455.9 L71 455.9 L71 455.9 L70 455.9 L70 455.9 L69 455.9 L69 455.8 L68 455.8 L68 455.8 L67 455.8 L67 455.8 L66 455.8 L66 455.8 L65 455.8 L65 455.8 L64 455.8 L64 455.8 L63 455.8 L63 455.8 L62 455.8 L62 455.8 L61 455.8 L61 455.9 L60 455.9 L60 455.9 L59 455.9 L59 455.9 L58 455.9 L58 456 L57 456Z" fill="#141414"/>
<text x="50.3" y="386.3" text-anchor="end" class="db">-2,5</text>
<rect x="54" y="382.5" width="2" height="1" fill="#333"/>
<text x="50.3" y="410.8" text-anchor="end" class="db">-6,0</text>
<rect x="54" y="407.0" width="2" height="1" fill="#333"/>
<text x="50.3" y="434.8" text-anchor="end" class="db">-12,0</text>
<rect x="54" y="431.0" width="2" height="1" fill="#333"/>
<text x="50.3" y="458.8" text-anchor="end" class="db3">-Inf.</text>
<rect x="54" y="455.0" width="2" height="1" fill="#333"/>
<text x="50.3" y="482.8" text-anchor="end" class="db">-12,0</text>
<rect x="54" y="479.0" width="2" height="1" fill="#333"/>
<text x="50.3" y="506.8" text-anchor="end" class="db">-6,0</text>
<rect x="54" y="503.0" width="2" height="1" fill="#333"/>
<text x="50.3" y="531.8" text-anchor="end" class="db">-2,5</text>
<rect x="54" y="528.0" width="2" height="1" fill="#333"/>

<rect x="373" y="160" width="1.200" height="394" fill="#111"/>


<rect x="8" y="554" width="692" height="44" fill="#efefef"/>
<!-- zoom buttons left -->
<rect x="9.500" y="555.500" width="14" height="13" rx="1.500" fill="url(#gScroll)" stroke="#999"/>
<rect x="26.500" y="555.500" width="14" height="13" rx="1.500" fill="url(#gScroll)" stroke="#999"/>
<path d="M13 562 h7 M16.500 558.500 v7" stroke="#111" stroke-width="2" fill="none"/>
<path d="M30 562 h7" stroke="#111" stroke-width="2" fill="none"/>
<path d="M52 558.500 v7 l-4 -3.500 z" fill="#555"/>
<rect x="60.500" y="555.500" width="335" height="13" rx="1.500" fill="url(#gScroll)" stroke="#aaa"/>
<path d="M63.500 558 v8 M66 558 v8" stroke="#777" stroke-width="1.200"/>
<path d="M390 558 v8 M392.500 558 v8" stroke="#777" stroke-width="1.200"/>
<path d="M626.300 558 v7 l3.500 -3.500 z" fill="#333"/>
<rect x="637.500" y="554.800" width="14" height="13.700" rx="1" fill="url(#gScroll)" stroke="#999"/>
<rect x="653.500" y="555" width="4.500" height="13.500" fill="#dcdcdc" stroke="#aaa"/>
<rect x="660.500" y="554.800" width="14" height="13.700" rx="1" fill="url(#gScroll)" stroke="#999"/>
<rect x="677.500" y="554.800" width="14" height="13.700" rx="1" fill="url(#gScroll)" stroke="#999"/>
<path d="M641 562 h7 M644.500 558.500 v7" stroke="#111" stroke-width="2" fill="none"/>
<path d="M664 562 h7" stroke="#111" stroke-width="2" fill="none"/>
<path d="M683.500 558 v8 l-4.500 -4 z M685.500 558 v8 l4.500 -4 z" fill="#111"/>
<!-- transport -->
<g fill="#949494" stroke="#7c7c7c" stroke-width="0.800">
<path d="M17.500 578 h2.500 v12 h-2.500 z M28.500 578 v12 l-8 -6 z"/>
<path d="M50.500 578 h2.500 v12 h-2.500 z M42 578 v12 l8 -6 z"/>
<rect x="66" y="578.500" width="11.500" height="11.500"/>
<path d="M88.500 577 v12.500 l13 -6.250 z"/>
<rect x="94" y="590.500" width="8" height="1.500" stroke="none" fill="#555"/>
</g>
<path d="M111 584.500 h16" stroke="#999" stroke-width="1.200"/>
<rect x="117.500" y="579.500" width="4" height="10" fill="#aaa" stroke="#888"/>
<circle cx="112.500" cy="584.500" r="1.800" fill="#ddd" stroke="#888"/>
<rect x="123" y="582.500" width="3" height="4" fill="#aaa" stroke="#888" stroke-width="0.700"/>
<text x="142" y="584" class="st">Rate: 0,00</text>
<!-- rate slider -->
<rect x="223.500" y="578" width="58" height="2" fill="#7c7c7c"/>
<rect x="305" y="578.500" width="57" height="1" fill="#999"/>
<path d="M286.300 573.200 v11.600 l-5.800 -5.800 z" fill="#a4a4a4" stroke="#808080" stroke-width="0.700"/>
<path d="M292 573.200 l5.500 5.800 l-5.500 5.800 l-5.500 -5.800 z" fill="#8c8c8c" stroke="#777" stroke-width="0.700"/>
<path d="M297.700 573.200 v11.600 l7 -5.800 z" fill="#808080" stroke="#6c6c6c" stroke-width="0.700"/>
<path d="M301.500 593.300 l4 -7 l4 7 z" fill="#909090"/>
<!-- time fields -->
<g fill="#f4f4f4" stroke="#d0d0d0">
<rect x="391.500" y="576.500" width="70" height="15"/>
<rect x="466.500" y="576.500" width="70" height="15"/>
<rect x="541.500" y="576.500" width="70" height="15"/>
<rect x="618.500" y="576.500" width="70" height="15"/>
</g>
<g fill="none" stroke="#a4a4a4">
<path d="M391.500 591.500 v-15 h70"/><path d="M466.500 591.500 v-15 h70"/><path d="M541.500 591.500 v-15 h70"/><path d="M618.500 591.500 v-15 h70"/>
</g>
<g class="st">
<text x="394" y="588.500" textLength="65" lengthAdjust="spacingAndGlyphs">00:00:13,467</text>
<text x="469" y="588.500" textLength="65" lengthAdjust="spacingAndGlyphs">00:00:29,350</text>
<text x="544" y="588.500" textLength="65" lengthAdjust="spacingAndGlyphs">00:00:15,882</text>
<text x="650" y="588.500" textLength="36.200" lengthAdjust="spacingAndGlyphs">1:4 096</text>
</g>


<rect x="700" y="108" width="1" height="490" fill="#a0a0a0"/>
<rect x="701" y="108" width="68" height="490" fill="#f0f0f0"/>
<g fill="#777">
<circle cx="710" cy="115.500" r="1.700"/><circle cx="715" cy="115.500" r="1.700"/><circle cx="720" cy="115.500" r="1.700"/><circle cx="725" cy="115.500" r="1.700"/><circle cx="730" cy="115.500" r="1.700"/><circle cx="735" cy="115.500" r="1.700"/>
</g>
<path d="M759.500 113 l6 6 M765.500 113 l-6 6" stroke="#444" stroke-width="1.500"/>
<rect x="709.500" y="129.500" width="19" height="16" rx="2" fill="url(#gDark)" stroke="#444"/>
<rect x="739.500" y="129.500" width="19" height="16" rx="2" fill="url(#gDark)" stroke="#444"/>
<text x="722" y="142.500" text-anchor="middle" style="font-size:12px;fill:#fff">1</text>
<text x="752" y="142.500" text-anchor="middle" style="font-size:12px;fill:#fff">2</text>
<rect x="709" y="151" width="9" height="11" fill="#707070"/><rect x="718" y="151" width="10" height="11" fill="#848484"/><rect x="728" y="151" width="9" height="11" fill="#909090"/>
<rect x="737" y="150" width="1" height="12" fill="#333"/>
<rect x="738" y="151" width="9" height="11" fill="#989898"/><rect x="747" y="151" width="9" height="11" fill="#a4a4a4"/><rect x="756" y="151" width="8" height="11" fill="#acacac"/>
<rect x="709" y="150" width="55" height="1" fill="#d0d0d0"/>
<!-- scope -->
<rect x="711.500" y="169.500" width="50" height="50" fill="#111" stroke="#ccc"/>
<g stroke="#555" stroke-width="0.800"><path d="M724 170 v49 M736.500 170 v49 M749 170 v49 M712 182 h49 M712 194.500 h49 M712 207 h49"/></g>
<path d="M712 170 l49 49 M761 170 l-49 49" stroke="#ddd" stroke-width="0.900"/>
<text x="717.300" y="235" text-anchor="middle" class="db3">-Inf.</text>
<text x="754.500" y="235" text-anchor="middle" class="db3">-Inf.</text>
<rect x="710" y="239" width="16.5" height="347.500" fill="#858585"/>
<rect x="710" y="239" width="16.5" height="5" fill="#8e8e8e"/>
<rect x="710" y="243.500" width="16.5" height="39.500" fill="#a6a6a6"/>
<rect x="710" y="283" width="16.5" height="20" fill="#959595"/>
<rect x="710" y="239" width="1.500" height="347.500" fill="#fff" opacity="0.250"/>
<rect x="724.5" y="239" width="2" height="347.500" fill="#000" opacity="0.130"/>
<rect x="710" y="239" width="16.5" height="1" fill="#000" opacity="0.150"/>
<rect x="746.5" y="239" width="16.5" height="347.500" fill="#858585"/>
<rect x="746.5" y="239" width="16.5" height="5" fill="#8e8e8e"/>
<rect x="746.5" y="243.500" width="16.5" height="39.500" fill="#a6a6a6"/>
<rect x="746.5" y="283" width="16.5" height="20" fill="#959595"/>
<rect x="746.5" y="239" width="1.500" height="347.500" fill="#fff" opacity="0.250"/>
<rect x="761.0" y="239" width="2" height="347.500" fill="#000" opacity="0.130"/>
<rect x="746.5" y="239" width="16.5" height="1" fill="#000" opacity="0.150"/>

<text x="735.500" y="266.0" text-anchor="middle" class="db">6</text>
<rect x="727" y="262.0" width="2" height="1" fill="#444"/>
<rect x="744" y="262.0" width="2" height="1" fill="#444"/>
<rect x="727" y="250.3" width="1" height="1" fill="#555"/>
<rect x="745" y="250.3" width="1" height="1" fill="#555"/>
<text x="735.500" y="289.3" text-anchor="middle" class="db">12</text>
<rect x="727" y="285.3" width="2" height="1" fill="#444"/>
<rect x="744" y="285.3" width="2" height="1" fill="#444"/>
<rect x="727" y="273.7" width="1" height="1" fill="#555"/>
<rect x="745" y="273.7" width="1" height="1" fill="#555"/>
<text x="735.500" y="312.6" text-anchor="middle" class="db">18</text>
<rect x="727" y="308.6" width="2" height="1" fill="#444"/>
<rect x="744" y="308.6" width="2" height="1" fill="#444"/>
<rect x="727" y="297.0" width="1" height="1" fill="#555"/>
<rect x="745" y="297.0" width="1" height="1" fill="#555"/>
<text x="735.500" y="335.9" text-anchor="middle" class="db">24</text>
<rect x="727" y="331.9" width="2" height="1" fill="#444"/>
<rect x="744" y="331.9" width="2" height="1" fill="#444"/>
<rect x="727" y="320.2" width="1" height="1" fill="#555"/>
<rect x="745" y="320.2" width="1" height="1" fill="#555"/>
<text x="735.500" y="359.2" text-anchor="middle" class="db">30</text>
<rect x="727" y="355.2" width="2" height="1" fill="#444"/>
<rect x="744" y="355.2" width="2" height="1" fill="#444"/>
<rect x="727" y="343.6" width="1" height="1" fill="#555"/>
<rect x="745" y="343.6" width="1" height="1" fill="#555"/>
<text x="735.500" y="382.5" text-anchor="middle" class="db">36</text>
<rect x="727" y="378.5" width="2" height="1" fill="#444"/>
<rect x="744" y="378.5" width="2" height="1" fill="#444"/>
<rect x="727" y="366.9" width="1" height="1" fill="#555"/>
<rect x="745" y="366.9" width="1" height="1" fill="#555"/>
<text x="735.500" y="405.8" text-anchor="middle" class="db">42</text>
<rect x="727" y="401.8" width="2" height="1" fill="#444"/>
<rect x="744" y="401.8" width="2" height="1" fill="#444"/>
<rect x="727" y="390.2" width="1" height="1" fill="#555"/>
<rect x="745" y="390.2" width="1" height="1" fill="#555"/>
<text x="735.500" y="429.1" text-anchor="middle" class="db">48</text>
<rect x="727" y="425.1" width="2" height="1" fill="#444"/>
<rect x="744" y="425.1" width="2" height="1" fill="#444"/>
<rect x="727" y="413.5" width="1" height="1" fill="#555"/>
<rect x="745" y="413.5" width="1" height="1" fill="#555"/>
<text x="735.500" y="452.4" text-anchor="middle" class="db">54</text>
<rect x="727" y="448.4" width="2" height="1" fill="#444"/>
<rect x="744" y="448.4" width="2" height="1" fill="#444"/>
<rect x="727" y="436.8" width="1" height="1" fill="#555"/>
<rect x="745" y="436.8" width="1" height="1" fill="#555"/>
<text x="735.500" y="475.7" text-anchor="middle" class="db">60</text>
<rect x="727" y="471.7" width="2" height="1" fill="#444"/>
<rect x="744" y="471.7" width="2" height="1" fill="#444"/>
<rect x="727" y="460.1" width="1" height="1" fill="#555"/>
<rect x="745" y="460.1" width="1" height="1" fill="#555"/>
<text x="735.500" y="499.0" text-anchor="middle" class="db">66</text>
<rect x="727" y="495.0" width="2" height="1" fill="#444"/>
<rect x="744" y="495.0" width="2" height="1" fill="#444"/>
<rect x="727" y="483.4" width="1" height="1" fill="#555"/>
<rect x="745" y="483.4" width="1" height="1" fill="#555"/>
<text x="735.500" y="522.3" text-anchor="middle" class="db">72</text>
<rect x="727" y="518.3" width="2" height="1" fill="#444"/>
<rect x="744" y="518.3" width="2" height="1" fill="#444"/>
<rect x="727" y="506.6" width="1" height="1" fill="#555"/>
<rect x="745" y="506.6" width="1" height="1" fill="#555"/>
<text x="735.500" y="545.6" text-anchor="middle" class="db">78</text>
<rect x="727" y="541.6" width="2" height="1" fill="#444"/>
<rect x="744" y="541.6" width="2" height="1" fill="#444"/>
<rect x="727" y="530.0" width="1" height="1" fill="#555"/>
<rect x="745" y="530.0" width="1" height="1" fill="#555"/>
<text x="735.500" y="568.9" text-anchor="middle" class="db">84</text>
<rect x="727" y="564.9" width="2" height="1" fill="#444"/>
<rect x="744" y="564.9" width="2" height="1" fill="#444"/>
<rect x="727" y="553.3" width="1" height="1" fill="#555"/>
<rect x="745" y="553.3" width="1" height="1" fill="#555"/>
<rect x="727" y="576.6" width="1" height="1" fill="#555"/>
<rect x="745" y="576.6" width="1" height="1" fill="#555"/>

<rect x="8" y="598" width="761" height="1" fill="#d8d8d8"/>
<rect x="8" y="599" width="761" height="1" fill="#fcfcfc"/>
<g fill="#f2f2f2" stroke="#dcdcdc">
<rect x="442.500" y="601.500" width="64" height="20"/>
<rect x="508.500" y="601.500" width="42" height="20"/>
<rect x="552.500" y="601.500" width="47" height="20"/>
<rect x="602.500" y="601.500" width="79" height="20"/>
<rect x="687.500" y="601.500" width="78" height="20"/>
</g>
<g fill="none" stroke="#a8a8a8">
<path d="M442.500 621.500 v-20 h64"/><path d="M508.500 621.500 v-20 h42"/><path d="M552.500 621.500 v-20 h47"/><path d="M602.500 621.500 v-20 h79"/><path d="M687.500 621.500 v-20 h78"/>
</g>
<g class="st">
<text x="454.600" y="614.500" textLength="47.700" lengthAdjust="spacingAndGlyphs">44 100 Hz</text>
<text x="516.400" y="614.500" textLength="25.800" lengthAdjust="spacingAndGlyphs">16 bit</text>
<text x="559.800" y="614.500" textLength="31.500" lengthAdjust="spacingAndGlyphs">Stereo</text>
<text x="611" y="614.500" textLength="65" lengthAdjust="spacingAndGlyphs">00:01:34,275</text>
<text x="702" y="614.500" textLength="58.500" lengthAdjust="spacingAndGlyphs">87 722,5 MB</text>
</g>

</svg>
</body></html>
